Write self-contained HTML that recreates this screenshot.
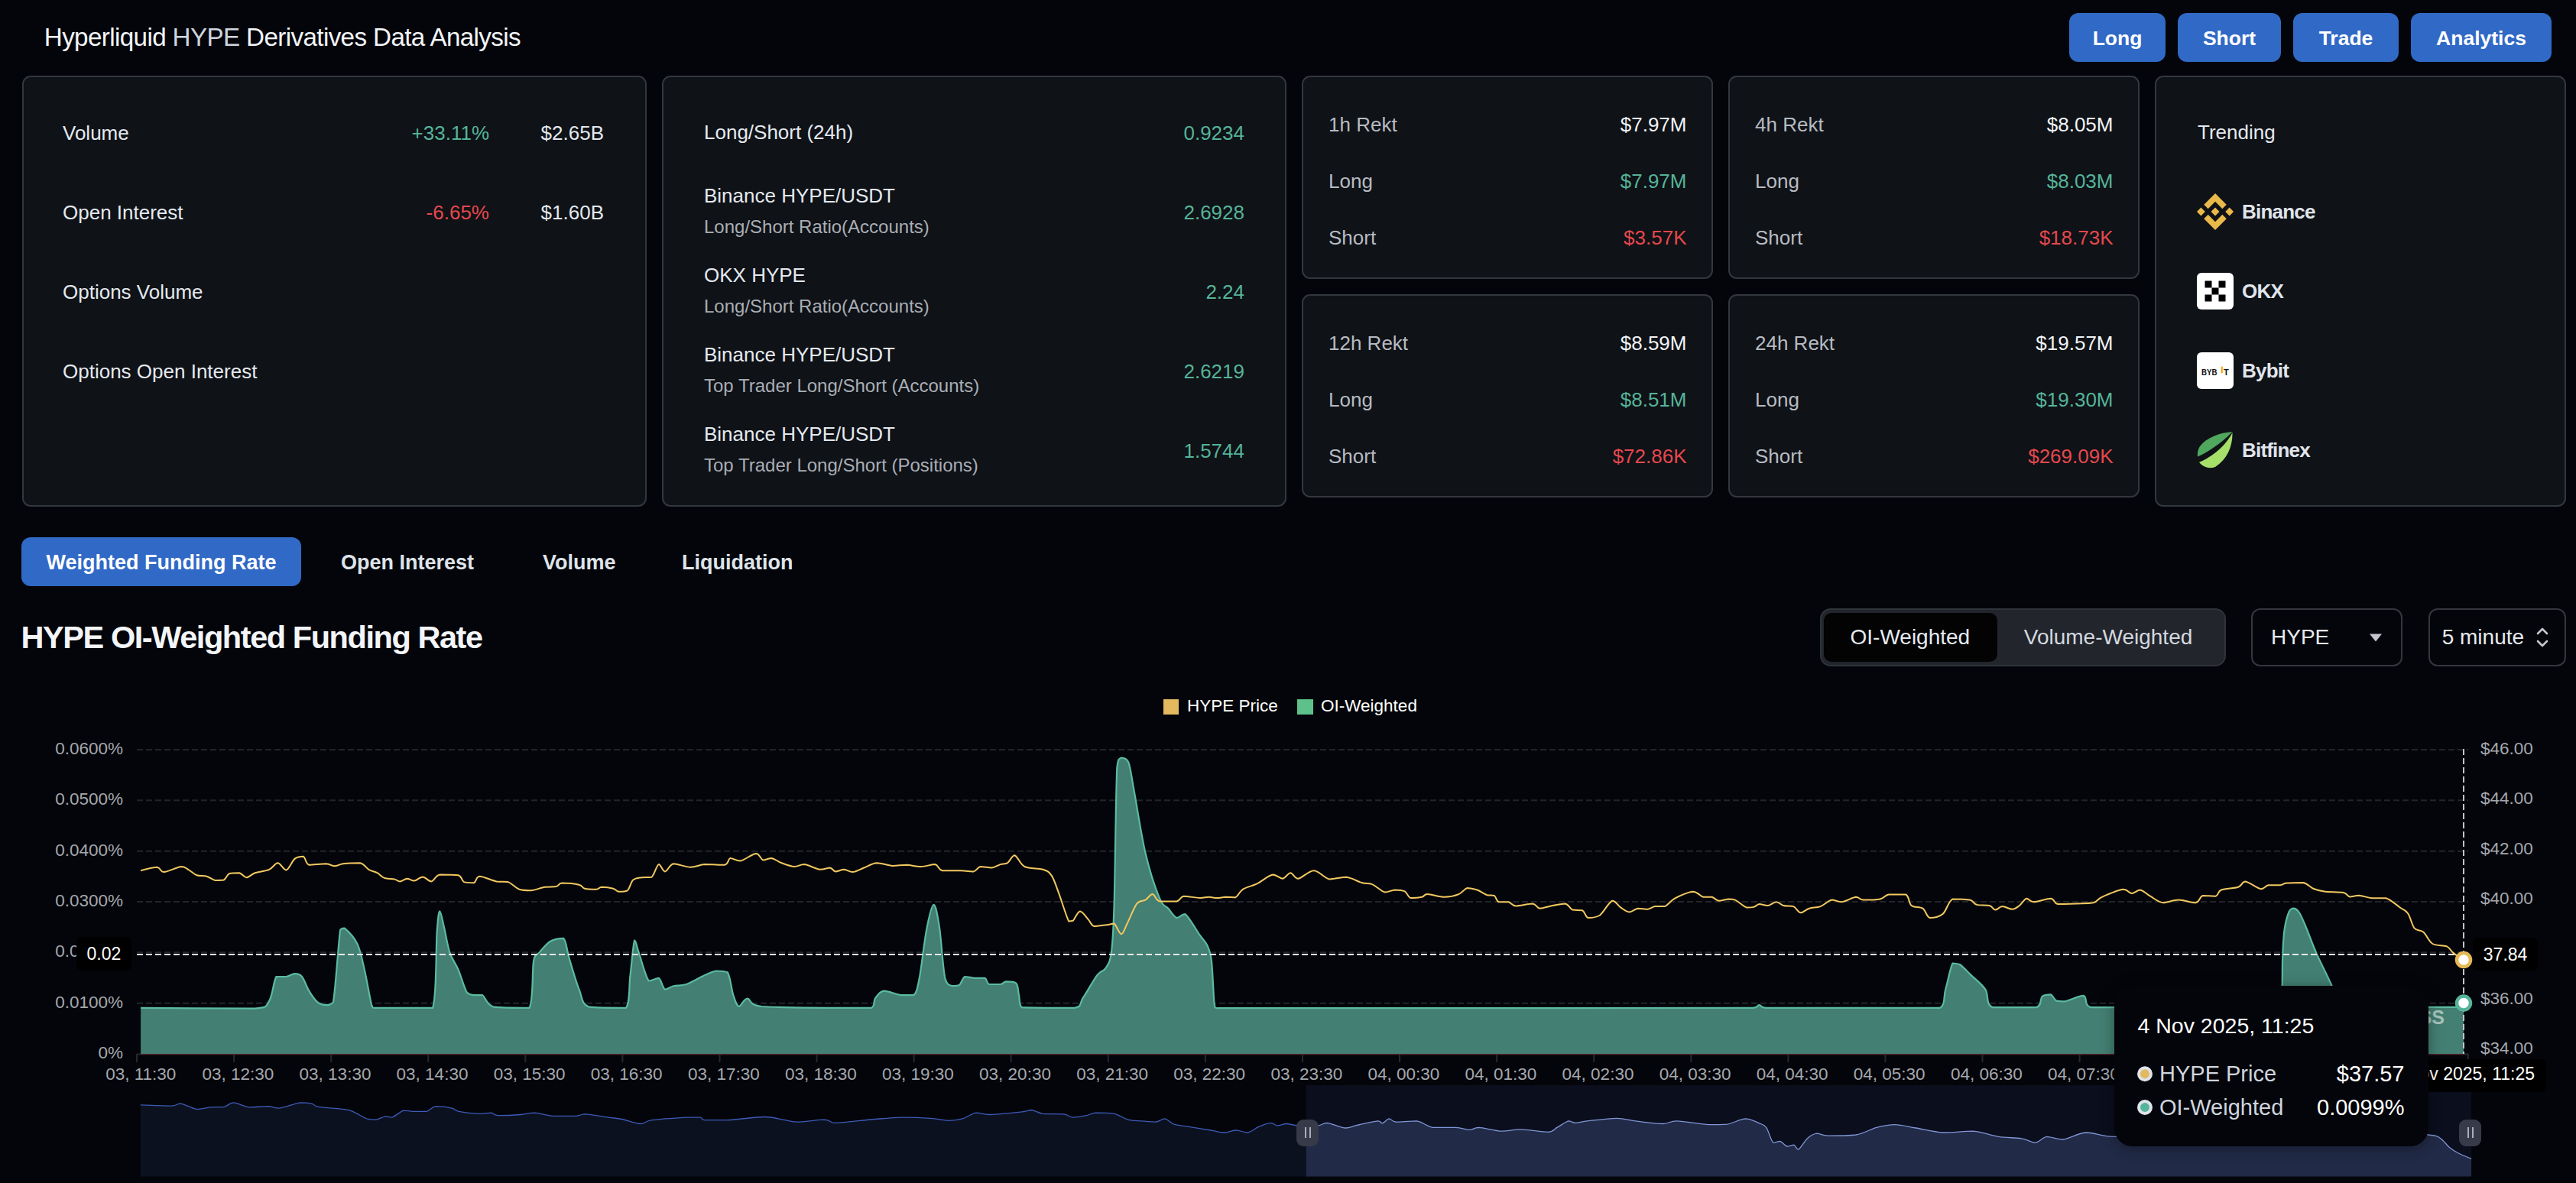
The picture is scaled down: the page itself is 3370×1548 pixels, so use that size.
<!DOCTYPE html>
<html><head><meta charset="utf-8"><title>Hyperliquid HYPE Derivatives Data Analysis</title>
<style>
html,body{margin:0;padding:0;background:#04050a;}
body{width:3370px;height:1548px;position:relative;overflow:hidden;font-family:"Liberation Sans", sans-serif;}
.t{position:absolute;white-space:nowrap;}
.r{position:absolute;}
</style></head><body>
<div class="t" style="left:57.8px;top:32.2px;font-size:33.2px;line-height:33.2px;color:#f3f5f8;font-weight:400;letter-spacing:-0.62px;">Hyperliquid <span style="color:#cdd5df">HYPE</span> Derivatives Data Analysis</div>
<div class="r" style="left:2707.0px;top:17.0px;width:126.0px;height:64.0px;background:#3169c6;border-radius:12px;"></div>
<div class="t" style="left:2770.0px;transform:translateX(-50%);top:37.4px;font-size:26.5px;line-height:26.5px;color:#ffffff;font-weight:700;">Long</div>
<div class="r" style="left:2849.0px;top:17.0px;width:135.0px;height:64.0px;background:#3169c6;border-radius:12px;"></div>
<div class="t" style="left:2916.5px;transform:translateX(-50%);top:37.4px;font-size:26.5px;line-height:26.5px;color:#ffffff;font-weight:700;">Short</div>
<div class="r" style="left:3000.0px;top:17.0px;width:138.0px;height:64.0px;background:#3169c6;border-radius:12px;"></div>
<div class="t" style="left:3069.0px;transform:translateX(-50%);top:37.4px;font-size:26.5px;line-height:26.5px;color:#ffffff;font-weight:700;">Trade</div>
<div class="r" style="left:3154.0px;top:17.0px;width:184.0px;height:64.0px;background:#3169c6;border-radius:12px;"></div>
<div class="t" style="left:3246.0px;transform:translateX(-50%);top:37.4px;font-size:26.5px;line-height:26.5px;color:#ffffff;font-weight:700;">Analytics</div>
<div class="r" style="left:29.0px;top:99.0px;width:817.0px;height:564.0px;background:#0f1217;border-radius:11px;border:2px solid #33373e;box-sizing:border-box;"></div>
<div class="t" style="left:82.0px;top:161.0px;font-size:26px;line-height:26px;color:#e4e9ef;font-weight:400;">Volume</div>
<div class="t" style="left:82.0px;top:265.0px;font-size:26px;line-height:26px;color:#e4e9ef;font-weight:400;">Open Interest</div>
<div class="t" style="left:82.0px;top:369.0px;font-size:26px;line-height:26px;color:#e4e9ef;font-weight:400;">Options Volume</div>
<div class="t" style="left:82.0px;top:473.0px;font-size:26px;line-height:26px;color:#e4e9ef;font-weight:400;">Options Open Interest</div>
<div class="t" style="right:2730.0px;top:161.0px;font-size:26px;line-height:26px;color:#55b499;font-weight:400;">+33.11%</div>
<div class="t" style="right:2580.0px;top:161.0px;font-size:26px;line-height:26px;color:#e4e9ef;font-weight:400;">$2.65B</div>
<div class="t" style="right:2730.0px;top:265.0px;font-size:26px;line-height:26px;color:#e5484d;font-weight:400;">-6.65%</div>
<div class="t" style="right:2580.0px;top:265.0px;font-size:26px;line-height:26px;color:#e4e9ef;font-weight:400;">$1.60B</div>
<div class="r" style="left:866.0px;top:99.0px;width:817.0px;height:564.0px;background:#0f1217;border-radius:11px;border:2px solid #33373e;box-sizing:border-box;"></div>
<div class="t" style="left:921.0px;top:160.0px;font-size:26px;line-height:26px;color:#e4e9ef;font-weight:400;">Long/Short (24h)</div>
<div class="t" style="right:1742.0px;top:161.0px;font-size:26px;line-height:26px;color:#55b499;font-weight:400;">0.9234</div>
<div class="t" style="left:921.0px;top:243.0px;font-size:26px;line-height:26px;color:#e4e9ef;font-weight:400;">Binance HYPE/USDT</div>
<div class="t" style="left:921.0px;top:284.7px;font-size:24px;line-height:24px;color:#a9aeb5;font-weight:400;">Long/Short Ratio(Accounts)</div>
<div class="t" style="right:1742.0px;top:265.0px;font-size:26px;line-height:26px;color:#55b499;font-weight:400;">2.6928</div>
<div class="t" style="left:921.0px;top:347.0px;font-size:26px;line-height:26px;color:#e4e9ef;font-weight:400;">OKX HYPE</div>
<div class="t" style="left:921.0px;top:388.7px;font-size:24px;line-height:24px;color:#a9aeb5;font-weight:400;">Long/Short Ratio(Accounts)</div>
<div class="t" style="right:1742.0px;top:369.0px;font-size:26px;line-height:26px;color:#55b499;font-weight:400;">2.24</div>
<div class="t" style="left:921.0px;top:451.0px;font-size:26px;line-height:26px;color:#e4e9ef;font-weight:400;">Binance HYPE/USDT</div>
<div class="t" style="left:921.0px;top:492.7px;font-size:24px;line-height:24px;color:#a9aeb5;font-weight:400;">Top Trader Long/Short (Accounts)</div>
<div class="t" style="right:1742.0px;top:473.0px;font-size:26px;line-height:26px;color:#55b499;font-weight:400;">2.6219</div>
<div class="t" style="left:921.0px;top:555.0px;font-size:26px;line-height:26px;color:#e4e9ef;font-weight:400;">Binance HYPE/USDT</div>
<div class="t" style="left:921.0px;top:596.7px;font-size:24px;line-height:24px;color:#a9aeb5;font-weight:400;">Top Trader Long/Short (Positions)</div>
<div class="t" style="right:1742.0px;top:577.0px;font-size:26px;line-height:26px;color:#55b499;font-weight:400;">1.5744</div>
<div class="r" style="left:1703.0px;top:99.0px;width:538.0px;height:266.0px;background:#0f1217;border-radius:11px;border:2px solid #33373e;box-sizing:border-box;"></div>
<div class="t" style="left:1738.0px;top:149.6px;font-size:26px;line-height:26px;color:#b7bbc1;font-weight:400;">1h Rekt</div>
<div class="t" style="left:1738.0px;top:223.7px;font-size:26px;line-height:26px;color:#b7bbc1;font-weight:400;">Long</div>
<div class="t" style="left:1738.0px;top:298.0px;font-size:26px;line-height:26px;color:#b7bbc1;font-weight:400;">Short</div>
<div class="t" style="right:1163.5px;top:149.6px;font-size:26px;line-height:26px;color:#f1f4f7;font-weight:400;">$7.97M</div>
<div class="t" style="right:1163.5px;top:223.7px;font-size:26px;line-height:26px;color:#55b499;font-weight:400;">$7.97M</div>
<div class="t" style="right:1163.5px;top:298.0px;font-size:26px;line-height:26px;color:#e5484d;font-weight:400;">$3.57K</div>
<div class="r" style="left:2261.0px;top:99.0px;width:538.0px;height:266.0px;background:#0f1217;border-radius:11px;border:2px solid #33373e;box-sizing:border-box;"></div>
<div class="t" style="left:2296.0px;top:149.6px;font-size:26px;line-height:26px;color:#b7bbc1;font-weight:400;">4h Rekt</div>
<div class="t" style="left:2296.0px;top:223.7px;font-size:26px;line-height:26px;color:#b7bbc1;font-weight:400;">Long</div>
<div class="t" style="left:2296.0px;top:298.0px;font-size:26px;line-height:26px;color:#b7bbc1;font-weight:400;">Short</div>
<div class="t" style="right:605.5px;top:149.6px;font-size:26px;line-height:26px;color:#f1f4f7;font-weight:400;">$8.05M</div>
<div class="t" style="right:605.5px;top:223.7px;font-size:26px;line-height:26px;color:#55b499;font-weight:400;">$8.03M</div>
<div class="t" style="right:605.5px;top:298.0px;font-size:26px;line-height:26px;color:#e5484d;font-weight:400;">$18.73K</div>
<div class="r" style="left:1703.0px;top:385.0px;width:538.0px;height:266.0px;background:#0f1217;border-radius:11px;border:2px solid #33373e;box-sizing:border-box;"></div>
<div class="t" style="left:1738.0px;top:435.6px;font-size:26px;line-height:26px;color:#b7bbc1;font-weight:400;">12h Rekt</div>
<div class="t" style="left:1738.0px;top:509.7px;font-size:26px;line-height:26px;color:#b7bbc1;font-weight:400;">Long</div>
<div class="t" style="left:1738.0px;top:584.0px;font-size:26px;line-height:26px;color:#b7bbc1;font-weight:400;">Short</div>
<div class="t" style="right:1163.5px;top:435.6px;font-size:26px;line-height:26px;color:#f1f4f7;font-weight:400;">$8.59M</div>
<div class="t" style="right:1163.5px;top:509.7px;font-size:26px;line-height:26px;color:#55b499;font-weight:400;">$8.51M</div>
<div class="t" style="right:1163.5px;top:584.0px;font-size:26px;line-height:26px;color:#e5484d;font-weight:400;">$72.86K</div>
<div class="r" style="left:2261.0px;top:385.0px;width:538.0px;height:266.0px;background:#0f1217;border-radius:11px;border:2px solid #33373e;box-sizing:border-box;"></div>
<div class="t" style="left:2296.0px;top:435.6px;font-size:26px;line-height:26px;color:#b7bbc1;font-weight:400;">24h Rekt</div>
<div class="t" style="left:2296.0px;top:509.7px;font-size:26px;line-height:26px;color:#b7bbc1;font-weight:400;">Long</div>
<div class="t" style="left:2296.0px;top:584.0px;font-size:26px;line-height:26px;color:#b7bbc1;font-weight:400;">Short</div>
<div class="t" style="right:605.5px;top:435.6px;font-size:26px;line-height:26px;color:#f1f4f7;font-weight:400;">$19.57M</div>
<div class="t" style="right:605.5px;top:509.7px;font-size:26px;line-height:26px;color:#55b499;font-weight:400;">$19.30M</div>
<div class="t" style="right:605.5px;top:584.0px;font-size:26px;line-height:26px;color:#e5484d;font-weight:400;">$269.09K</div>
<div class="r" style="left:2819.0px;top:99.0px;width:538.0px;height:564.0px;background:#0f1217;border-radius:11px;border:2px solid #33373e;box-sizing:border-box;"></div>
<div class="t" style="left:2875.0px;top:160.0px;font-size:26px;line-height:26px;color:#e4e9ef;font-weight:400;">Trending</div>
<div class="t" style="left:2933.0px;top:264.0px;font-size:26px;line-height:26px;color:#e0e5ec;font-weight:700;letter-spacing:-0.8px;">Binance</div>
<div class="t" style="left:2933.0px;top:368.0px;font-size:26px;line-height:26px;color:#e0e5ec;font-weight:700;letter-spacing:-0.8px;">OKX</div>
<div class="t" style="left:2933.0px;top:472.0px;font-size:26px;line-height:26px;color:#e0e5ec;font-weight:700;letter-spacing:-0.8px;">Bybit</div>
<div class="t" style="left:2933.0px;top:576.0px;font-size:26px;line-height:26px;color:#e0e5ec;font-weight:700;letter-spacing:-0.8px;">Bitfinex</div>

<svg class="r" style="left:2874px;top:253px" width="48" height="48" viewBox="0 0 126.61 126.61"><g fill="#e9b949"><path d="M38.73 53.2l24.59-24.58 24.6 24.6 14.3-14.31L63.32 0 24.42 38.9l14.31 14.3M0 63.31l14.3-14.31 14.31 14.31-14.31 14.3zM38.73 73.41l24.59 24.59 24.6-24.6 14.31 14.29-38.9 38.91-38.91-38.88-.02-.02 14.32-14.29M98.3 63.31l14.3-14.31 14.31 14.3-14.31 14.32z"/><path d="M77.83 63.3L63.32 48.78 52.59 59.51l-1.24 1.23-2.54 2.54-.02.02.02.03 14.51 14.5 14.51-14.52.01-.01-.01-.01"/></g></svg>
<svg class="r" style="left:2874px;top:357px" width="48" height="48" viewBox="0 0 48 48"><rect width="48" height="48" rx="6" fill="#fff"/><g fill="#000"><rect x="10.5" y="10.5" width="9" height="9"/><rect x="28.5" y="10.5" width="9" height="9"/><rect x="19.5" y="19.5" width="9" height="9"/><rect x="10.5" y="28.5" width="9" height="9"/><rect x="28.5" y="28.5" width="9" height="9"/></g></svg>
<svg class="r" style="left:2874px;top:461px" width="48" height="48" viewBox="0 0 48 48"><rect width="48" height="48" rx="6" fill="#fff"/><text x="6" y="29.5" font-family="Liberation Sans" font-weight="700" font-size="11" fill="#111" textLength="20.5" lengthAdjust="spacingAndGlyphs">BYB</text><rect x="31.7" y="18.7" width="2.1" height="8.6" fill="#f7a600"/><text x="35" y="29.5" font-family="Liberation Sans" font-weight="700" font-size="11" fill="#111">T</text></svg>
<svg class="r" style="left:2874px;top:565px" width="48" height="48" viewBox="0 0 48 48"><path d="M46.5,0 C30,1 12,8 4,19 C1,24 0.5,29 1,32.5 C14,27 32,15 46.5,0 Z" fill="#4fa85e"/><path d="M46.5,1 C47,18 40,36 24,46 C16,49 8,46 3,40 C20,33 38,18 46.5,1 Z" fill="#a6e06a"/></svg>

<div class="r" style="left:28.0px;top:703.0px;width:366.0px;height:64.0px;background:#3169c6;border-radius:12px;"></div>
<div class="t" style="left:60.5px;top:723.1px;font-size:27px;line-height:27px;color:#ffffff;font-weight:700;">Weighted Funding Rate</div>
<div class="t" style="left:446.0px;top:723.1px;font-size:27px;line-height:27px;color:#dfe4ea;font-weight:700;">Open Interest</div>
<div class="t" style="left:710.0px;top:723.1px;font-size:27px;line-height:27px;color:#dfe4ea;font-weight:700;">Volume</div>
<div class="t" style="left:892.0px;top:723.1px;font-size:27px;line-height:27px;color:#dfe4ea;font-weight:700;">Liquidation</div>
<div class="t" style="left:27.6px;top:813.3px;font-size:41.5px;line-height:41.5px;color:#f3f5f8;font-weight:700;letter-spacing:-1.44px;">HYPE OI-Weighted Funding Rate</div>
<div class="r" style="left:2380.5px;top:796.0px;width:531.1px;height:76.0px;background:#22252c;border-radius:14px;border:2px solid #2f333a;box-sizing:border-box;"></div>
<div class="r" style="left:2385.6px;top:801.8px;width:227.8px;height:64.2px;background:#030304;border-radius:10px;"></div>
<div class="t" style="left:2420.5px;top:820.3px;font-size:28px;line-height:28px;color:#e6eaf0;font-weight:400;">OI-Weighted</div>
<div class="t" style="left:2647.8px;top:820.3px;font-size:28px;line-height:28px;color:#d3d8df;font-weight:400;">Volume-Weighted</div>
<div class="r" style="left:2945.0px;top:796.0px;width:198.0px;height:76.0px;background:#04050a;border-radius:12px;border:2px solid #33373e;box-sizing:border-box;"></div>
<div class="t" style="left:2971.0px;top:820.3px;font-size:28px;line-height:28px;color:#e6eaf0;font-weight:400;">HYPE</div>
<svg class="r" style="left:3099px;top:829px" width="18" height="11" viewBox="0 0 18 11"><path d="M1 0.5 H17 L9 10.5 Z" fill="#c3c7cd"/></svg>
<div class="r" style="left:3177.0px;top:796.0px;width:180.0px;height:76.0px;background:#04050a;border-radius:12px;border:2px solid #33373e;box-sizing:border-box;"></div>
<div class="t" style="left:3194.7px;top:820.3px;font-size:28px;line-height:28px;color:#e6eaf0;font-weight:400;">5 minute</div>
<svg class="r" style="left:3317px;top:820px" width="18" height="28" viewBox="0 0 18 28"><path d="M3 9 L9 3 L15 9 M3 19 L9 25 L15 19" stroke="#c3c7cd" stroke-width="2.6" fill="none" stroke-linecap="round" stroke-linejoin="round"/></svg>
<div class="r" style="left:1522.0px;top:915.0px;width:20.0px;height:20.0px;background:#e2b95f;border-radius:0px;"></div>
<div class="t" style="left:1553.0px;top:912.6px;font-size:22.5px;line-height:22.5px;color:#ffffff;font-weight:400;">HYPE Price</div>
<div class="r" style="left:1697.0px;top:915.0px;width:20.5px;height:20.0px;background:#5ec08a;border-radius:0px;"></div>
<div class="t" style="left:1728.0px;top:912.6px;font-size:22.5px;line-height:22.5px;color:#ffffff;font-weight:400;">OI-Weighted</div>
<svg class="r" style="left:0;top:0" width="3370" height="1548" viewBox="0 0 3370 1548">
<rect x="1708.7" y="1420" width="1524.4" height="119.6" fill="#0a0e1d"/>
<clipPath id="cl"><rect x="0" y="0" width="1708.7" height="1548"/></clipPath><clipPath id="cr"><rect x="1708.7" y="0" width="2000" height="1548"/></clipPath>
<path d="M183.8,1445.9 C190.5,1446.1 215.5,1447.1 224.2,1447.1 C232.9,1446.8 230.7,1444.1 236.2,1444.1 C241.7,1444.8 250.7,1450.5 257.2,1451.3 C263.7,1451.3 269.3,1449.4 275.3,1448.9 C281.3,1448.4 288.3,1448.9 293.3,1448.3 C298.3,1447.3 299.9,1442.9 305.4,1442.9 C310.9,1443.0 318.9,1448.1 326.4,1448.9 C333.9,1448.9 344.0,1447.7 350.5,1447.7 C357.0,1447.9 358.5,1450.1 365.5,1450.1 C372.5,1449.3 385.6,1443.9 392.6,1442.9 C399.6,1442.9 403.7,1443.2 407.7,1444.1 C411.7,1445.0 409.2,1447.0 416.7,1448.3 C424.2,1449.6 444.8,1450.6 452.8,1451.9 C460.8,1453.2 460.3,1454.1 464.8,1456.1 C469.3,1458.1 475.4,1462.4 479.9,1463.9 C484.4,1465.1 487.9,1465.1 491.9,1465.1 C495.9,1464.6 500.4,1461.4 503.9,1460.9 C507.4,1460.9 509.0,1462.1 513.0,1462.1 C517.0,1460.8 523.5,1454.4 528.0,1453.1 C532.5,1453.1 535.0,1454.1 540.0,1454.3 C545.0,1454.3 553.1,1454.3 558.1,1454.3 C563.1,1453.2 564.6,1448.4 570.1,1447.7 C575.6,1447.7 586.2,1449.0 591.2,1450.1 C596.2,1451.2 594.2,1453.1 600.2,1454.3 C606.2,1455.5 620.3,1457.0 627.3,1457.3 C634.3,1457.3 638.3,1456.1 642.3,1456.1 C646.3,1456.5 644.8,1459.3 651.3,1459.7 C657.8,1459.7 673.4,1459.1 681.4,1458.5 C689.4,1457.9 692.5,1456.1 699.5,1456.1 C706.5,1456.4 714.5,1459.6 723.5,1460.3 C732.5,1460.3 746.6,1460.3 753.6,1460.3 C760.6,1459.9 758.7,1457.9 765.7,1457.9 C772.7,1458.2 787.8,1461.0 795.8,1462.1 C803.8,1463.2 806.8,1463.1 813.8,1464.5 C820.8,1465.9 831.4,1470.3 837.9,1470.5 C844.4,1470.5 842.9,1467.1 852.9,1465.7 C862.9,1464.3 887.5,1462.7 898.0,1462.1 C908.5,1462.1 912.1,1462.1 916.1,1462.1 C920.1,1462.7 916.1,1465.1 922.1,1465.7 C928.1,1465.7 939.2,1465.7 952.2,1465.7 C965.2,1465.0 988.3,1461.6 1000.3,1461.5 C1012.3,1461.5 1017.4,1464.0 1024.4,1465.1 C1031.4,1466.2 1033.4,1468.1 1042.4,1468.1 C1051.4,1468.1 1070.5,1465.1 1078.5,1465.1 C1086.5,1465.3 1085.6,1468.8 1090.6,1469.3 C1095.6,1469.3 1099.6,1468.9 1108.6,1468.1 C1117.6,1467.3 1132.7,1465.5 1144.7,1464.5 C1156.7,1463.5 1168.8,1462.3 1180.8,1462.1 C1192.8,1462.1 1206.9,1462.6 1216.9,1463.3 C1226.9,1464.0 1233.9,1466.2 1240.9,1466.3 C1247.9,1466.3 1253.0,1465.6 1259.0,1463.9 C1265.0,1462.2 1271.1,1457.0 1277.1,1456.1 C1283.1,1456.1 1285.2,1458.5 1295.2,1458.5 C1305.2,1458.3 1328.3,1455.9 1337.3,1454.9 C1346.3,1453.9 1344.8,1452.5 1349.3,1452.5 C1353.8,1452.9 1357.4,1456.4 1364.4,1457.3 C1371.4,1457.9 1384.9,1457.3 1391.4,1457.9 C1397.9,1458.7 1398.5,1461.8 1403.5,1462.1 C1408.5,1462.1 1416.5,1460.7 1421.5,1459.7 C1426.5,1458.7 1427.6,1456.5 1433.6,1456.1 C1439.6,1456.1 1450.7,1456.1 1457.7,1457.3 C1464.7,1458.8 1469.7,1463.5 1475.7,1465.1 C1481.7,1466.7 1487.8,1466.4 1493.8,1466.9 C1499.8,1467.4 1506.8,1468.1 1511.8,1468.1 C1516.8,1467.6 1519.8,1463.9 1523.8,1463.9 C1527.8,1464.4 1530.8,1469.4 1535.8,1471.1 C1540.8,1472.8 1546.0,1472.9 1554.0,1474.2 C1562.0,1475.5 1576.0,1477.7 1584.0,1479.0 C1592.0,1480.3 1596.5,1482.0 1602.0,1482.0 C1607.5,1482.0 1612.0,1479.0 1617.0,1479.0 C1622.0,1479.0 1627.1,1482.0 1632.1,1482.0 C1637.1,1481.2 1642.1,1476.3 1647.1,1474.2 C1652.1,1472.1 1658.2,1469.5 1662.2,1469.3 C1666.2,1469.3 1667.7,1472.7 1671.2,1472.9 C1674.7,1472.9 1678.7,1470.5 1683.2,1470.5 C1687.7,1470.5 1691.5,1472.5 1698.3,1472.9 C1705.1,1472.9 1717.8,1472.9 1724.1,1472.9 C1730.4,1472.3 1730.1,1469.3 1736.1,1469.3 C1742.1,1469.8 1753.7,1475.5 1760.2,1476.0 C1766.7,1476.0 1768.2,1473.8 1775.2,1472.3 C1782.2,1470.8 1796.8,1467.3 1802.3,1466.9 C1807.8,1466.9 1805.8,1469.9 1808.3,1469.9 C1810.8,1469.4 1814.3,1464.2 1817.3,1463.9 C1820.3,1463.9 1820.4,1467.6 1826.4,1468.1 C1832.4,1468.1 1845.4,1466.9 1853.4,1466.9 C1861.4,1468.1 1866.0,1474.0 1874.5,1475.4 C1883.0,1475.4 1896.6,1475.4 1904.6,1475.4 C1912.6,1475.9 1917.6,1478.4 1922.6,1478.4 C1927.6,1478.4 1927.6,1475.4 1934.6,1475.4 C1941.6,1475.7 1955.7,1479.8 1964.7,1480.2 C1973.7,1480.2 1978.8,1477.8 1988.8,1477.8 C1998.8,1478.0 2016.9,1481.4 2024.9,1481.4 C2032.9,1481.0 2032.4,1477.8 2036.9,1475.4 C2041.4,1473.0 2048.0,1467.9 2052.0,1466.9 C2056.0,1466.9 2057.0,1469.3 2061.0,1469.3 C2065.0,1469.3 2067.1,1467.9 2076.1,1466.9 C2085.1,1465.9 2104.7,1463.3 2115.2,1463.3 C2125.7,1463.3 2129.2,1465.7 2139.2,1466.9 C2149.2,1468.1 2166.3,1470.5 2175.3,1470.5 C2184.3,1470.5 2183.4,1466.9 2193.4,1466.9 C2203.4,1467.1 2224.5,1471.0 2235.5,1471.7 C2246.5,1471.7 2251.6,1471.7 2259.6,1471.1 C2267.6,1469.8 2276.6,1464.1 2283.6,1463.9 C2290.6,1463.9 2297.2,1468.0 2301.7,1469.9 C2306.2,1471.8 2307.7,1471.2 2310.7,1475.4 C2313.7,1479.6 2316.7,1492.2 2319.7,1495.2 C2322.7,1495.2 2325.8,1493.4 2328.8,1493.4 C2331.8,1494.2 2334.8,1499.2 2337.8,1500.0 C2340.8,1500.0 2344.3,1498.2 2346.8,1498.2 C2349.3,1498.9 2349.8,1504.2 2352.8,1504.2 C2355.8,1502.7 2360.9,1492.7 2364.9,1489.2 C2368.9,1485.7 2372.4,1483.7 2376.9,1483.2 C2381.4,1483.2 2383.4,1485.9 2391.9,1486.2 C2400.4,1486.2 2417.5,1486.2 2428.0,1485.0 C2438.5,1483.2 2446.6,1477.6 2455.1,1475.4 C2463.6,1473.2 2470.7,1471.7 2479.2,1471.7 C2487.7,1471.8 2495.8,1474.3 2506.3,1476.0 C2516.8,1477.7 2529.9,1481.3 2542.4,1482.0 C2554.9,1482.0 2569.5,1480.2 2581.5,1480.2 C2593.5,1481.1 2604.1,1485.8 2614.6,1487.4 C2625.1,1489.0 2636.7,1488.5 2644.7,1489.8 C2652.7,1491.1 2657.2,1495.2 2662.7,1495.2 C2668.2,1494.8 2671.7,1488.1 2677.7,1487.4 C2683.7,1487.4 2690.3,1491.0 2698.8,1491.0 C2707.3,1490.1 2717.9,1482.6 2728.9,1482.0 C2739.9,1482.0 2749.8,1487.1 2765.0,1487.4 C2780.2,1487.4 2800.8,1485.4 2820.0,1484.0 C2839.2,1482.6 2860.0,1480.3 2880.0,1479.0 C2900.0,1477.7 2920.0,1476.8 2940.0,1476.0 C2960.0,1475.2 2980.0,1474.0 3000.0,1474.0 C3020.0,1474.0 3040.0,1475.0 3060.0,1476.0 C3080.0,1477.0 3100.5,1478.5 3120.0,1480.0 C3139.5,1481.5 3165.1,1483.5 3177.1,1485.0 C3189.1,1486.5 3187.7,1486.5 3192.2,1489.2 C3196.7,1491.9 3200.2,1497.9 3204.2,1501.2 C3208.2,1504.5 3211.4,1506.5 3216.2,1509.0 C3221.0,1511.5 3230.3,1515.1 3233.1,1516.3 L3233.1,1539.6 L183.8,1539.6 Z" fill="#0c1120" clip-path="url(#cl)"/>
<path d="M183.8,1445.9 C190.5,1446.1 215.5,1447.1 224.2,1447.1 C232.9,1446.8 230.7,1444.1 236.2,1444.1 C241.7,1444.8 250.7,1450.5 257.2,1451.3 C263.7,1451.3 269.3,1449.4 275.3,1448.9 C281.3,1448.4 288.3,1448.9 293.3,1448.3 C298.3,1447.3 299.9,1442.9 305.4,1442.9 C310.9,1443.0 318.9,1448.1 326.4,1448.9 C333.9,1448.9 344.0,1447.7 350.5,1447.7 C357.0,1447.9 358.5,1450.1 365.5,1450.1 C372.5,1449.3 385.6,1443.9 392.6,1442.9 C399.6,1442.9 403.7,1443.2 407.7,1444.1 C411.7,1445.0 409.2,1447.0 416.7,1448.3 C424.2,1449.6 444.8,1450.6 452.8,1451.9 C460.8,1453.2 460.3,1454.1 464.8,1456.1 C469.3,1458.1 475.4,1462.4 479.9,1463.9 C484.4,1465.1 487.9,1465.1 491.9,1465.1 C495.9,1464.6 500.4,1461.4 503.9,1460.9 C507.4,1460.9 509.0,1462.1 513.0,1462.1 C517.0,1460.8 523.5,1454.4 528.0,1453.1 C532.5,1453.1 535.0,1454.1 540.0,1454.3 C545.0,1454.3 553.1,1454.3 558.1,1454.3 C563.1,1453.2 564.6,1448.4 570.1,1447.7 C575.6,1447.7 586.2,1449.0 591.2,1450.1 C596.2,1451.2 594.2,1453.1 600.2,1454.3 C606.2,1455.5 620.3,1457.0 627.3,1457.3 C634.3,1457.3 638.3,1456.1 642.3,1456.1 C646.3,1456.5 644.8,1459.3 651.3,1459.7 C657.8,1459.7 673.4,1459.1 681.4,1458.5 C689.4,1457.9 692.5,1456.1 699.5,1456.1 C706.5,1456.4 714.5,1459.6 723.5,1460.3 C732.5,1460.3 746.6,1460.3 753.6,1460.3 C760.6,1459.9 758.7,1457.9 765.7,1457.9 C772.7,1458.2 787.8,1461.0 795.8,1462.1 C803.8,1463.2 806.8,1463.1 813.8,1464.5 C820.8,1465.9 831.4,1470.3 837.9,1470.5 C844.4,1470.5 842.9,1467.1 852.9,1465.7 C862.9,1464.3 887.5,1462.7 898.0,1462.1 C908.5,1462.1 912.1,1462.1 916.1,1462.1 C920.1,1462.7 916.1,1465.1 922.1,1465.7 C928.1,1465.7 939.2,1465.7 952.2,1465.7 C965.2,1465.0 988.3,1461.6 1000.3,1461.5 C1012.3,1461.5 1017.4,1464.0 1024.4,1465.1 C1031.4,1466.2 1033.4,1468.1 1042.4,1468.1 C1051.4,1468.1 1070.5,1465.1 1078.5,1465.1 C1086.5,1465.3 1085.6,1468.8 1090.6,1469.3 C1095.6,1469.3 1099.6,1468.9 1108.6,1468.1 C1117.6,1467.3 1132.7,1465.5 1144.7,1464.5 C1156.7,1463.5 1168.8,1462.3 1180.8,1462.1 C1192.8,1462.1 1206.9,1462.6 1216.9,1463.3 C1226.9,1464.0 1233.9,1466.2 1240.9,1466.3 C1247.9,1466.3 1253.0,1465.6 1259.0,1463.9 C1265.0,1462.2 1271.1,1457.0 1277.1,1456.1 C1283.1,1456.1 1285.2,1458.5 1295.2,1458.5 C1305.2,1458.3 1328.3,1455.9 1337.3,1454.9 C1346.3,1453.9 1344.8,1452.5 1349.3,1452.5 C1353.8,1452.9 1357.4,1456.4 1364.4,1457.3 C1371.4,1457.9 1384.9,1457.3 1391.4,1457.9 C1397.9,1458.7 1398.5,1461.8 1403.5,1462.1 C1408.5,1462.1 1416.5,1460.7 1421.5,1459.7 C1426.5,1458.7 1427.6,1456.5 1433.6,1456.1 C1439.6,1456.1 1450.7,1456.1 1457.7,1457.3 C1464.7,1458.8 1469.7,1463.5 1475.7,1465.1 C1481.7,1466.7 1487.8,1466.4 1493.8,1466.9 C1499.8,1467.4 1506.8,1468.1 1511.8,1468.1 C1516.8,1467.6 1519.8,1463.9 1523.8,1463.9 C1527.8,1464.4 1530.8,1469.4 1535.8,1471.1 C1540.8,1472.8 1546.0,1472.9 1554.0,1474.2 C1562.0,1475.5 1576.0,1477.7 1584.0,1479.0 C1592.0,1480.3 1596.5,1482.0 1602.0,1482.0 C1607.5,1482.0 1612.0,1479.0 1617.0,1479.0 C1622.0,1479.0 1627.1,1482.0 1632.1,1482.0 C1637.1,1481.2 1642.1,1476.3 1647.1,1474.2 C1652.1,1472.1 1658.2,1469.5 1662.2,1469.3 C1666.2,1469.3 1667.7,1472.7 1671.2,1472.9 C1674.7,1472.9 1678.7,1470.5 1683.2,1470.5 C1687.7,1470.5 1691.5,1472.5 1698.3,1472.9 C1705.1,1472.9 1717.8,1472.9 1724.1,1472.9 C1730.4,1472.3 1730.1,1469.3 1736.1,1469.3 C1742.1,1469.8 1753.7,1475.5 1760.2,1476.0 C1766.7,1476.0 1768.2,1473.8 1775.2,1472.3 C1782.2,1470.8 1796.8,1467.3 1802.3,1466.9 C1807.8,1466.9 1805.8,1469.9 1808.3,1469.9 C1810.8,1469.4 1814.3,1464.2 1817.3,1463.9 C1820.3,1463.9 1820.4,1467.6 1826.4,1468.1 C1832.4,1468.1 1845.4,1466.9 1853.4,1466.9 C1861.4,1468.1 1866.0,1474.0 1874.5,1475.4 C1883.0,1475.4 1896.6,1475.4 1904.6,1475.4 C1912.6,1475.9 1917.6,1478.4 1922.6,1478.4 C1927.6,1478.4 1927.6,1475.4 1934.6,1475.4 C1941.6,1475.7 1955.7,1479.8 1964.7,1480.2 C1973.7,1480.2 1978.8,1477.8 1988.8,1477.8 C1998.8,1478.0 2016.9,1481.4 2024.9,1481.4 C2032.9,1481.0 2032.4,1477.8 2036.9,1475.4 C2041.4,1473.0 2048.0,1467.9 2052.0,1466.9 C2056.0,1466.9 2057.0,1469.3 2061.0,1469.3 C2065.0,1469.3 2067.1,1467.9 2076.1,1466.9 C2085.1,1465.9 2104.7,1463.3 2115.2,1463.3 C2125.7,1463.3 2129.2,1465.7 2139.2,1466.9 C2149.2,1468.1 2166.3,1470.5 2175.3,1470.5 C2184.3,1470.5 2183.4,1466.9 2193.4,1466.9 C2203.4,1467.1 2224.5,1471.0 2235.5,1471.7 C2246.5,1471.7 2251.6,1471.7 2259.6,1471.1 C2267.6,1469.8 2276.6,1464.1 2283.6,1463.9 C2290.6,1463.9 2297.2,1468.0 2301.7,1469.9 C2306.2,1471.8 2307.7,1471.2 2310.7,1475.4 C2313.7,1479.6 2316.7,1492.2 2319.7,1495.2 C2322.7,1495.2 2325.8,1493.4 2328.8,1493.4 C2331.8,1494.2 2334.8,1499.2 2337.8,1500.0 C2340.8,1500.0 2344.3,1498.2 2346.8,1498.2 C2349.3,1498.9 2349.8,1504.2 2352.8,1504.2 C2355.8,1502.7 2360.9,1492.7 2364.9,1489.2 C2368.9,1485.7 2372.4,1483.7 2376.9,1483.2 C2381.4,1483.2 2383.4,1485.9 2391.9,1486.2 C2400.4,1486.2 2417.5,1486.2 2428.0,1485.0 C2438.5,1483.2 2446.6,1477.6 2455.1,1475.4 C2463.6,1473.2 2470.7,1471.7 2479.2,1471.7 C2487.7,1471.8 2495.8,1474.3 2506.3,1476.0 C2516.8,1477.7 2529.9,1481.3 2542.4,1482.0 C2554.9,1482.0 2569.5,1480.2 2581.5,1480.2 C2593.5,1481.1 2604.1,1485.8 2614.6,1487.4 C2625.1,1489.0 2636.7,1488.5 2644.7,1489.8 C2652.7,1491.1 2657.2,1495.2 2662.7,1495.2 C2668.2,1494.8 2671.7,1488.1 2677.7,1487.4 C2683.7,1487.4 2690.3,1491.0 2698.8,1491.0 C2707.3,1490.1 2717.9,1482.6 2728.9,1482.0 C2739.9,1482.0 2749.8,1487.1 2765.0,1487.4 C2780.2,1487.4 2800.8,1485.4 2820.0,1484.0 C2839.2,1482.6 2860.0,1480.3 2880.0,1479.0 C2900.0,1477.7 2920.0,1476.8 2940.0,1476.0 C2960.0,1475.2 2980.0,1474.0 3000.0,1474.0 C3020.0,1474.0 3040.0,1475.0 3060.0,1476.0 C3080.0,1477.0 3100.5,1478.5 3120.0,1480.0 C3139.5,1481.5 3165.1,1483.5 3177.1,1485.0 C3189.1,1486.5 3187.7,1486.5 3192.2,1489.2 C3196.7,1491.9 3200.2,1497.9 3204.2,1501.2 C3208.2,1504.5 3211.4,1506.5 3216.2,1509.0 C3221.0,1511.5 3230.3,1515.1 3233.1,1516.3 L3233.1,1539.6 L183.8,1539.6 Z" fill="#212a46" clip-path="url(#cr)"/>
<path d="M183.8,1445.9 C190.5,1446.1 215.5,1447.1 224.2,1447.1 C232.9,1446.8 230.7,1444.1 236.2,1444.1 C241.7,1444.8 250.7,1450.5 257.2,1451.3 C263.7,1451.3 269.3,1449.4 275.3,1448.9 C281.3,1448.4 288.3,1448.9 293.3,1448.3 C298.3,1447.3 299.9,1442.9 305.4,1442.9 C310.9,1443.0 318.9,1448.1 326.4,1448.9 C333.9,1448.9 344.0,1447.7 350.5,1447.7 C357.0,1447.9 358.5,1450.1 365.5,1450.1 C372.5,1449.3 385.6,1443.9 392.6,1442.9 C399.6,1442.9 403.7,1443.2 407.7,1444.1 C411.7,1445.0 409.2,1447.0 416.7,1448.3 C424.2,1449.6 444.8,1450.6 452.8,1451.9 C460.8,1453.2 460.3,1454.1 464.8,1456.1 C469.3,1458.1 475.4,1462.4 479.9,1463.9 C484.4,1465.1 487.9,1465.1 491.9,1465.1 C495.9,1464.6 500.4,1461.4 503.9,1460.9 C507.4,1460.9 509.0,1462.1 513.0,1462.1 C517.0,1460.8 523.5,1454.4 528.0,1453.1 C532.5,1453.1 535.0,1454.1 540.0,1454.3 C545.0,1454.3 553.1,1454.3 558.1,1454.3 C563.1,1453.2 564.6,1448.4 570.1,1447.7 C575.6,1447.7 586.2,1449.0 591.2,1450.1 C596.2,1451.2 594.2,1453.1 600.2,1454.3 C606.2,1455.5 620.3,1457.0 627.3,1457.3 C634.3,1457.3 638.3,1456.1 642.3,1456.1 C646.3,1456.5 644.8,1459.3 651.3,1459.7 C657.8,1459.7 673.4,1459.1 681.4,1458.5 C689.4,1457.9 692.5,1456.1 699.5,1456.1 C706.5,1456.4 714.5,1459.6 723.5,1460.3 C732.5,1460.3 746.6,1460.3 753.6,1460.3 C760.6,1459.9 758.7,1457.9 765.7,1457.9 C772.7,1458.2 787.8,1461.0 795.8,1462.1 C803.8,1463.2 806.8,1463.1 813.8,1464.5 C820.8,1465.9 831.4,1470.3 837.9,1470.5 C844.4,1470.5 842.9,1467.1 852.9,1465.7 C862.9,1464.3 887.5,1462.7 898.0,1462.1 C908.5,1462.1 912.1,1462.1 916.1,1462.1 C920.1,1462.7 916.1,1465.1 922.1,1465.7 C928.1,1465.7 939.2,1465.7 952.2,1465.7 C965.2,1465.0 988.3,1461.6 1000.3,1461.5 C1012.3,1461.5 1017.4,1464.0 1024.4,1465.1 C1031.4,1466.2 1033.4,1468.1 1042.4,1468.1 C1051.4,1468.1 1070.5,1465.1 1078.5,1465.1 C1086.5,1465.3 1085.6,1468.8 1090.6,1469.3 C1095.6,1469.3 1099.6,1468.9 1108.6,1468.1 C1117.6,1467.3 1132.7,1465.5 1144.7,1464.5 C1156.7,1463.5 1168.8,1462.3 1180.8,1462.1 C1192.8,1462.1 1206.9,1462.6 1216.9,1463.3 C1226.9,1464.0 1233.9,1466.2 1240.9,1466.3 C1247.9,1466.3 1253.0,1465.6 1259.0,1463.9 C1265.0,1462.2 1271.1,1457.0 1277.1,1456.1 C1283.1,1456.1 1285.2,1458.5 1295.2,1458.5 C1305.2,1458.3 1328.3,1455.9 1337.3,1454.9 C1346.3,1453.9 1344.8,1452.5 1349.3,1452.5 C1353.8,1452.9 1357.4,1456.4 1364.4,1457.3 C1371.4,1457.9 1384.9,1457.3 1391.4,1457.9 C1397.9,1458.7 1398.5,1461.8 1403.5,1462.1 C1408.5,1462.1 1416.5,1460.7 1421.5,1459.7 C1426.5,1458.7 1427.6,1456.5 1433.6,1456.1 C1439.6,1456.1 1450.7,1456.1 1457.7,1457.3 C1464.7,1458.8 1469.7,1463.5 1475.7,1465.1 C1481.7,1466.7 1487.8,1466.4 1493.8,1466.9 C1499.8,1467.4 1506.8,1468.1 1511.8,1468.1 C1516.8,1467.6 1519.8,1463.9 1523.8,1463.9 C1527.8,1464.4 1530.8,1469.4 1535.8,1471.1 C1540.8,1472.8 1546.0,1472.9 1554.0,1474.2 C1562.0,1475.5 1576.0,1477.7 1584.0,1479.0 C1592.0,1480.3 1596.5,1482.0 1602.0,1482.0 C1607.5,1482.0 1612.0,1479.0 1617.0,1479.0 C1622.0,1479.0 1627.1,1482.0 1632.1,1482.0 C1637.1,1481.2 1642.1,1476.3 1647.1,1474.2 C1652.1,1472.1 1658.2,1469.5 1662.2,1469.3 C1666.2,1469.3 1667.7,1472.7 1671.2,1472.9 C1674.7,1472.9 1678.7,1470.5 1683.2,1470.5 C1687.7,1470.5 1691.5,1472.5 1698.3,1472.9 C1705.1,1472.9 1717.8,1472.9 1724.1,1472.9 C1730.4,1472.3 1730.1,1469.3 1736.1,1469.3 C1742.1,1469.8 1753.7,1475.5 1760.2,1476.0 C1766.7,1476.0 1768.2,1473.8 1775.2,1472.3 C1782.2,1470.8 1796.8,1467.3 1802.3,1466.9 C1807.8,1466.9 1805.8,1469.9 1808.3,1469.9 C1810.8,1469.4 1814.3,1464.2 1817.3,1463.9 C1820.3,1463.9 1820.4,1467.6 1826.4,1468.1 C1832.4,1468.1 1845.4,1466.9 1853.4,1466.9 C1861.4,1468.1 1866.0,1474.0 1874.5,1475.4 C1883.0,1475.4 1896.6,1475.4 1904.6,1475.4 C1912.6,1475.9 1917.6,1478.4 1922.6,1478.4 C1927.6,1478.4 1927.6,1475.4 1934.6,1475.4 C1941.6,1475.7 1955.7,1479.8 1964.7,1480.2 C1973.7,1480.2 1978.8,1477.8 1988.8,1477.8 C1998.8,1478.0 2016.9,1481.4 2024.9,1481.4 C2032.9,1481.0 2032.4,1477.8 2036.9,1475.4 C2041.4,1473.0 2048.0,1467.9 2052.0,1466.9 C2056.0,1466.9 2057.0,1469.3 2061.0,1469.3 C2065.0,1469.3 2067.1,1467.9 2076.1,1466.9 C2085.1,1465.9 2104.7,1463.3 2115.2,1463.3 C2125.7,1463.3 2129.2,1465.7 2139.2,1466.9 C2149.2,1468.1 2166.3,1470.5 2175.3,1470.5 C2184.3,1470.5 2183.4,1466.9 2193.4,1466.9 C2203.4,1467.1 2224.5,1471.0 2235.5,1471.7 C2246.5,1471.7 2251.6,1471.7 2259.6,1471.1 C2267.6,1469.8 2276.6,1464.1 2283.6,1463.9 C2290.6,1463.9 2297.2,1468.0 2301.7,1469.9 C2306.2,1471.8 2307.7,1471.2 2310.7,1475.4 C2313.7,1479.6 2316.7,1492.2 2319.7,1495.2 C2322.7,1495.2 2325.8,1493.4 2328.8,1493.4 C2331.8,1494.2 2334.8,1499.2 2337.8,1500.0 C2340.8,1500.0 2344.3,1498.2 2346.8,1498.2 C2349.3,1498.9 2349.8,1504.2 2352.8,1504.2 C2355.8,1502.7 2360.9,1492.7 2364.9,1489.2 C2368.9,1485.7 2372.4,1483.7 2376.9,1483.2 C2381.4,1483.2 2383.4,1485.9 2391.9,1486.2 C2400.4,1486.2 2417.5,1486.2 2428.0,1485.0 C2438.5,1483.2 2446.6,1477.6 2455.1,1475.4 C2463.6,1473.2 2470.7,1471.7 2479.2,1471.7 C2487.7,1471.8 2495.8,1474.3 2506.3,1476.0 C2516.8,1477.7 2529.9,1481.3 2542.4,1482.0 C2554.9,1482.0 2569.5,1480.2 2581.5,1480.2 C2593.5,1481.1 2604.1,1485.8 2614.6,1487.4 C2625.1,1489.0 2636.7,1488.5 2644.7,1489.8 C2652.7,1491.1 2657.2,1495.2 2662.7,1495.2 C2668.2,1494.8 2671.7,1488.1 2677.7,1487.4 C2683.7,1487.4 2690.3,1491.0 2698.8,1491.0 C2707.3,1490.1 2717.9,1482.6 2728.9,1482.0 C2739.9,1482.0 2749.8,1487.1 2765.0,1487.4 C2780.2,1487.4 2800.8,1485.4 2820.0,1484.0 C2839.2,1482.6 2860.0,1480.3 2880.0,1479.0 C2900.0,1477.7 2920.0,1476.8 2940.0,1476.0 C2960.0,1475.2 2980.0,1474.0 3000.0,1474.0 C3020.0,1474.0 3040.0,1475.0 3060.0,1476.0 C3080.0,1477.0 3100.5,1478.5 3120.0,1480.0 C3139.5,1481.5 3165.1,1483.5 3177.1,1485.0 C3189.1,1486.5 3187.7,1486.5 3192.2,1489.2 C3196.7,1491.9 3200.2,1497.9 3204.2,1501.2 C3208.2,1504.5 3211.4,1506.5 3216.2,1509.0 C3221.0,1511.5 3230.3,1515.1 3233.1,1516.3" fill="none" stroke="#3d5bb8" stroke-width="1.3" clip-path="url(#cl)"/>
<path d="M183.8,1445.9 C190.5,1446.1 215.5,1447.1 224.2,1447.1 C232.9,1446.8 230.7,1444.1 236.2,1444.1 C241.7,1444.8 250.7,1450.5 257.2,1451.3 C263.7,1451.3 269.3,1449.4 275.3,1448.9 C281.3,1448.4 288.3,1448.9 293.3,1448.3 C298.3,1447.3 299.9,1442.9 305.4,1442.9 C310.9,1443.0 318.9,1448.1 326.4,1448.9 C333.9,1448.9 344.0,1447.7 350.5,1447.7 C357.0,1447.9 358.5,1450.1 365.5,1450.1 C372.5,1449.3 385.6,1443.9 392.6,1442.9 C399.6,1442.9 403.7,1443.2 407.7,1444.1 C411.7,1445.0 409.2,1447.0 416.7,1448.3 C424.2,1449.6 444.8,1450.6 452.8,1451.9 C460.8,1453.2 460.3,1454.1 464.8,1456.1 C469.3,1458.1 475.4,1462.4 479.9,1463.9 C484.4,1465.1 487.9,1465.1 491.9,1465.1 C495.9,1464.6 500.4,1461.4 503.9,1460.9 C507.4,1460.9 509.0,1462.1 513.0,1462.1 C517.0,1460.8 523.5,1454.4 528.0,1453.1 C532.5,1453.1 535.0,1454.1 540.0,1454.3 C545.0,1454.3 553.1,1454.3 558.1,1454.3 C563.1,1453.2 564.6,1448.4 570.1,1447.7 C575.6,1447.7 586.2,1449.0 591.2,1450.1 C596.2,1451.2 594.2,1453.1 600.2,1454.3 C606.2,1455.5 620.3,1457.0 627.3,1457.3 C634.3,1457.3 638.3,1456.1 642.3,1456.1 C646.3,1456.5 644.8,1459.3 651.3,1459.7 C657.8,1459.7 673.4,1459.1 681.4,1458.5 C689.4,1457.9 692.5,1456.1 699.5,1456.1 C706.5,1456.4 714.5,1459.6 723.5,1460.3 C732.5,1460.3 746.6,1460.3 753.6,1460.3 C760.6,1459.9 758.7,1457.9 765.7,1457.9 C772.7,1458.2 787.8,1461.0 795.8,1462.1 C803.8,1463.2 806.8,1463.1 813.8,1464.5 C820.8,1465.9 831.4,1470.3 837.9,1470.5 C844.4,1470.5 842.9,1467.1 852.9,1465.7 C862.9,1464.3 887.5,1462.7 898.0,1462.1 C908.5,1462.1 912.1,1462.1 916.1,1462.1 C920.1,1462.7 916.1,1465.1 922.1,1465.7 C928.1,1465.7 939.2,1465.7 952.2,1465.7 C965.2,1465.0 988.3,1461.6 1000.3,1461.5 C1012.3,1461.5 1017.4,1464.0 1024.4,1465.1 C1031.4,1466.2 1033.4,1468.1 1042.4,1468.1 C1051.4,1468.1 1070.5,1465.1 1078.5,1465.1 C1086.5,1465.3 1085.6,1468.8 1090.6,1469.3 C1095.6,1469.3 1099.6,1468.9 1108.6,1468.1 C1117.6,1467.3 1132.7,1465.5 1144.7,1464.5 C1156.7,1463.5 1168.8,1462.3 1180.8,1462.1 C1192.8,1462.1 1206.9,1462.6 1216.9,1463.3 C1226.9,1464.0 1233.9,1466.2 1240.9,1466.3 C1247.9,1466.3 1253.0,1465.6 1259.0,1463.9 C1265.0,1462.2 1271.1,1457.0 1277.1,1456.1 C1283.1,1456.1 1285.2,1458.5 1295.2,1458.5 C1305.2,1458.3 1328.3,1455.9 1337.3,1454.9 C1346.3,1453.9 1344.8,1452.5 1349.3,1452.5 C1353.8,1452.9 1357.4,1456.4 1364.4,1457.3 C1371.4,1457.9 1384.9,1457.3 1391.4,1457.9 C1397.9,1458.7 1398.5,1461.8 1403.5,1462.1 C1408.5,1462.1 1416.5,1460.7 1421.5,1459.7 C1426.5,1458.7 1427.6,1456.5 1433.6,1456.1 C1439.6,1456.1 1450.7,1456.1 1457.7,1457.3 C1464.7,1458.8 1469.7,1463.5 1475.7,1465.1 C1481.7,1466.7 1487.8,1466.4 1493.8,1466.9 C1499.8,1467.4 1506.8,1468.1 1511.8,1468.1 C1516.8,1467.6 1519.8,1463.9 1523.8,1463.9 C1527.8,1464.4 1530.8,1469.4 1535.8,1471.1 C1540.8,1472.8 1546.0,1472.9 1554.0,1474.2 C1562.0,1475.5 1576.0,1477.7 1584.0,1479.0 C1592.0,1480.3 1596.5,1482.0 1602.0,1482.0 C1607.5,1482.0 1612.0,1479.0 1617.0,1479.0 C1622.0,1479.0 1627.1,1482.0 1632.1,1482.0 C1637.1,1481.2 1642.1,1476.3 1647.1,1474.2 C1652.1,1472.1 1658.2,1469.5 1662.2,1469.3 C1666.2,1469.3 1667.7,1472.7 1671.2,1472.9 C1674.7,1472.9 1678.7,1470.5 1683.2,1470.5 C1687.7,1470.5 1691.5,1472.5 1698.3,1472.9 C1705.1,1472.9 1717.8,1472.9 1724.1,1472.9 C1730.4,1472.3 1730.1,1469.3 1736.1,1469.3 C1742.1,1469.8 1753.7,1475.5 1760.2,1476.0 C1766.7,1476.0 1768.2,1473.8 1775.2,1472.3 C1782.2,1470.8 1796.8,1467.3 1802.3,1466.9 C1807.8,1466.9 1805.8,1469.9 1808.3,1469.9 C1810.8,1469.4 1814.3,1464.2 1817.3,1463.9 C1820.3,1463.9 1820.4,1467.6 1826.4,1468.1 C1832.4,1468.1 1845.4,1466.9 1853.4,1466.9 C1861.4,1468.1 1866.0,1474.0 1874.5,1475.4 C1883.0,1475.4 1896.6,1475.4 1904.6,1475.4 C1912.6,1475.9 1917.6,1478.4 1922.6,1478.4 C1927.6,1478.4 1927.6,1475.4 1934.6,1475.4 C1941.6,1475.7 1955.7,1479.8 1964.7,1480.2 C1973.7,1480.2 1978.8,1477.8 1988.8,1477.8 C1998.8,1478.0 2016.9,1481.4 2024.9,1481.4 C2032.9,1481.0 2032.4,1477.8 2036.9,1475.4 C2041.4,1473.0 2048.0,1467.9 2052.0,1466.9 C2056.0,1466.9 2057.0,1469.3 2061.0,1469.3 C2065.0,1469.3 2067.1,1467.9 2076.1,1466.9 C2085.1,1465.9 2104.7,1463.3 2115.2,1463.3 C2125.7,1463.3 2129.2,1465.7 2139.2,1466.9 C2149.2,1468.1 2166.3,1470.5 2175.3,1470.5 C2184.3,1470.5 2183.4,1466.9 2193.4,1466.9 C2203.4,1467.1 2224.5,1471.0 2235.5,1471.7 C2246.5,1471.7 2251.6,1471.7 2259.6,1471.1 C2267.6,1469.8 2276.6,1464.1 2283.6,1463.9 C2290.6,1463.9 2297.2,1468.0 2301.7,1469.9 C2306.2,1471.8 2307.7,1471.2 2310.7,1475.4 C2313.7,1479.6 2316.7,1492.2 2319.7,1495.2 C2322.7,1495.2 2325.8,1493.4 2328.8,1493.4 C2331.8,1494.2 2334.8,1499.2 2337.8,1500.0 C2340.8,1500.0 2344.3,1498.2 2346.8,1498.2 C2349.3,1498.9 2349.8,1504.2 2352.8,1504.2 C2355.8,1502.7 2360.9,1492.7 2364.9,1489.2 C2368.9,1485.7 2372.4,1483.7 2376.9,1483.2 C2381.4,1483.2 2383.4,1485.9 2391.9,1486.2 C2400.4,1486.2 2417.5,1486.2 2428.0,1485.0 C2438.5,1483.2 2446.6,1477.6 2455.1,1475.4 C2463.6,1473.2 2470.7,1471.7 2479.2,1471.7 C2487.7,1471.8 2495.8,1474.3 2506.3,1476.0 C2516.8,1477.7 2529.9,1481.3 2542.4,1482.0 C2554.9,1482.0 2569.5,1480.2 2581.5,1480.2 C2593.5,1481.1 2604.1,1485.8 2614.6,1487.4 C2625.1,1489.0 2636.7,1488.5 2644.7,1489.8 C2652.7,1491.1 2657.2,1495.2 2662.7,1495.2 C2668.2,1494.8 2671.7,1488.1 2677.7,1487.4 C2683.7,1487.4 2690.3,1491.0 2698.8,1491.0 C2707.3,1490.1 2717.9,1482.6 2728.9,1482.0 C2739.9,1482.0 2749.8,1487.1 2765.0,1487.4 C2780.2,1487.4 2800.8,1485.4 2820.0,1484.0 C2839.2,1482.6 2860.0,1480.3 2880.0,1479.0 C2900.0,1477.7 2920.0,1476.8 2940.0,1476.0 C2960.0,1475.2 2980.0,1474.0 3000.0,1474.0 C3020.0,1474.0 3040.0,1475.0 3060.0,1476.0 C3080.0,1477.0 3100.5,1478.5 3120.0,1480.0 C3139.5,1481.5 3165.1,1483.5 3177.1,1485.0 C3189.1,1486.5 3187.7,1486.5 3192.2,1489.2 C3196.7,1491.9 3200.2,1497.9 3204.2,1501.2 C3208.2,1504.5 3211.4,1506.5 3216.2,1509.0 C3221.0,1511.5 3230.3,1515.1 3233.1,1516.3" fill="none" stroke="#8196d6" stroke-width="1.3" clip-path="url(#cr)"/>
<line x1="179" y1="981.0" x2="3229" y2="981.0" stroke="#222429" stroke-width="2" stroke-dasharray="8 4"/>
<line x1="179" y1="1047.3" x2="3229" y2="1047.3" stroke="#222429" stroke-width="2" stroke-dasharray="8 4"/>
<line x1="179" y1="1113.7" x2="3229" y2="1113.7" stroke="#222429" stroke-width="2" stroke-dasharray="8 4"/>
<line x1="179" y1="1180.0" x2="3229" y2="1180.0" stroke="#222429" stroke-width="2" stroke-dasharray="8 4"/>
<line x1="179" y1="1246.3" x2="3229" y2="1246.3" stroke="#222429" stroke-width="2" stroke-dasharray="8 4"/>
<line x1="179" y1="1312.7" x2="3229" y2="1312.7" stroke="#222429" stroke-width="2" stroke-dasharray="8 4"/>
<line x1="179" y1="1379.5" x2="3229" y2="1379.5" stroke="#26282e" stroke-width="2"/>
<line x1="179.0" y1="1379" x2="179.0" y2="1390" stroke="#26282e" stroke-width="2"/>
<line x1="306.1" y1="1379" x2="306.1" y2="1390" stroke="#26282e" stroke-width="2"/>
<line x1="433.2" y1="1379" x2="433.2" y2="1390" stroke="#26282e" stroke-width="2"/>
<line x1="560.2" y1="1379" x2="560.2" y2="1390" stroke="#26282e" stroke-width="2"/>
<line x1="687.3" y1="1379" x2="687.3" y2="1390" stroke="#26282e" stroke-width="2"/>
<line x1="814.4" y1="1379" x2="814.4" y2="1390" stroke="#26282e" stroke-width="2"/>
<line x1="941.5" y1="1379" x2="941.5" y2="1390" stroke="#26282e" stroke-width="2"/>
<line x1="1068.6" y1="1379" x2="1068.6" y2="1390" stroke="#26282e" stroke-width="2"/>
<line x1="1195.6" y1="1379" x2="1195.6" y2="1390" stroke="#26282e" stroke-width="2"/>
<line x1="1322.7" y1="1379" x2="1322.7" y2="1390" stroke="#26282e" stroke-width="2"/>
<line x1="1449.8" y1="1379" x2="1449.8" y2="1390" stroke="#26282e" stroke-width="2"/>
<line x1="1576.9" y1="1379" x2="1576.9" y2="1390" stroke="#26282e" stroke-width="2"/>
<line x1="1704.0" y1="1379" x2="1704.0" y2="1390" stroke="#26282e" stroke-width="2"/>
<line x1="1831.0" y1="1379" x2="1831.0" y2="1390" stroke="#26282e" stroke-width="2"/>
<line x1="1958.1" y1="1379" x2="1958.1" y2="1390" stroke="#26282e" stroke-width="2"/>
<line x1="2085.2" y1="1379" x2="2085.2" y2="1390" stroke="#26282e" stroke-width="2"/>
<line x1="2212.3" y1="1379" x2="2212.3" y2="1390" stroke="#26282e" stroke-width="2"/>
<line x1="2339.4" y1="1379" x2="2339.4" y2="1390" stroke="#26282e" stroke-width="2"/>
<line x1="2466.4" y1="1379" x2="2466.4" y2="1390" stroke="#26282e" stroke-width="2"/>
<line x1="2593.5" y1="1379" x2="2593.5" y2="1390" stroke="#26282e" stroke-width="2"/>
<line x1="2720.6" y1="1379" x2="2720.6" y2="1390" stroke="#26282e" stroke-width="2"/>
<line x1="2847.7" y1="1379" x2="2847.7" y2="1390" stroke="#26282e" stroke-width="2"/>
<line x1="2974.8" y1="1379" x2="2974.8" y2="1390" stroke="#26282e" stroke-width="2"/>
<line x1="3101.8" y1="1379" x2="3101.8" y2="1390" stroke="#26282e" stroke-width="2"/>
<line x1="3228.9" y1="1379" x2="3228.9" y2="1390" stroke="#26282e" stroke-width="2"/>
<path d="M184.1,1318.9 C209.0,1319.0 305.6,1319.6 333.6,1319.6 C352.2,1318.0 347.6,1316.5 352.2,1309.6 C356.8,1302.7 357.8,1283.3 361.5,1278.0 C365.2,1278.0 370.5,1278.0 374.5,1278.0 C378.5,1277.4 382.3,1274.2 385.7,1274.2 C389.1,1274.2 391.9,1274.3 395.0,1278.0 C398.1,1281.7 400.9,1291.0 404.3,1296.6 C407.7,1302.2 411.7,1308.3 415.4,1311.4 C419.1,1314.5 423.2,1315.1 426.6,1315.1 C430.0,1315.1 432.8,1315.1 435.9,1311.4 C439.0,1295.0 442.7,1232.7 445.2,1216.6 C447.7,1214.7 447.1,1214.7 450.8,1214.7 C454.5,1217.8 463.2,1226.2 467.5,1235.2 C471.8,1244.2 473.7,1255.4 476.8,1268.7 C479.9,1282.0 483.9,1306.7 486.1,1315.1 C488.3,1318.9 486.1,1318.3 489.8,1318.9 C503.1,1318.9 552.5,1318.9 566.1,1318.9 C571.6,1302.5 570.1,1241.4 571.6,1220.3 C573.1,1199.2 573.8,1193.6 575.3,1192.4 C576.8,1192.4 578.7,1203.9 580.9,1212.9 C583.1,1221.9 585.3,1237.1 588.4,1246.4 C591.5,1255.7 595.8,1260.0 599.5,1268.7 C603.2,1277.4 607.3,1292.8 610.7,1298.4 C614.1,1302.1 616.6,1301.5 620.0,1302.1 C623.4,1302.1 626.8,1302.1 631.1,1302.1 C635.4,1304.7 635.8,1314.9 646.0,1317.7 C656.2,1318.9 683.8,1318.9 692.5,1318.9 C698.1,1308.9 695.9,1269.6 698.1,1257.5 C700.3,1246.4 701.8,1250.7 705.5,1246.4 C709.2,1242.1 715.1,1234.6 720.4,1231.5 C725.7,1228.4 733.1,1227.8 737.1,1227.8 C741.1,1231.5 741.2,1242.6 744.6,1253.8 C748.0,1265.0 753.3,1284.0 757.6,1294.7 C761.9,1305.4 760.4,1313.7 770.6,1317.7 C780.8,1318.9 809.9,1318.9 818.9,1318.9 C824.5,1312.0 822.6,1290.8 824.5,1276.1 C826.4,1261.4 828.2,1235.7 830.1,1230.7 C832.0,1230.7 832.6,1237.6 835.7,1246.4 C838.8,1255.2 844.4,1277.9 848.7,1283.5 C853.0,1283.5 858.2,1279.8 861.7,1279.8 C865.2,1281.7 866.8,1293.0 870.0,1294.7 C873.2,1294.7 876.6,1291.3 881.2,1290.2 C885.9,1289.1 891.1,1290.2 897.9,1288.0 C904.7,1285.7 915.6,1279.0 922.1,1276.1 C928.6,1273.2 932.0,1271.1 936.9,1270.5 C941.8,1270.5 948.1,1270.5 951.8,1272.4 C955.5,1277.7 956.8,1294.7 959.3,1302.1 C961.8,1309.5 963.6,1316.2 966.7,1317.0 C969.8,1317.0 972.8,1306.6 977.8,1306.6 C982.8,1306.6 977.8,1315.0 996.4,1317.0 C1023.4,1318.9 1114.8,1318.9 1139.6,1318.9 C1145.2,1317.1 1142.4,1309.6 1145.2,1305.9 C1148.0,1302.2 1150.8,1297.2 1156.4,1296.6 C1162.0,1296.6 1172.2,1301.2 1178.7,1302.1 C1185.2,1302.1 1191.4,1302.1 1195.4,1302.1 C1199.4,1298.4 1200.0,1294.0 1202.8,1279.8 C1205.6,1265.5 1209.0,1232.6 1212.1,1216.6 C1215.2,1200.6 1218.6,1184.5 1221.4,1183.9 C1224.2,1183.9 1226.4,1196.9 1228.9,1212.9 C1231.4,1228.9 1233.5,1266.9 1236.3,1279.8 C1239.1,1290.2 1242.5,1288.7 1245.6,1290.2 C1248.7,1290.2 1252.1,1290.2 1254.9,1289.1 C1257.7,1287.1 1258.9,1279.5 1262.3,1278.0 C1265.7,1278.0 1270.9,1279.5 1275.3,1279.8 C1279.7,1279.8 1285.3,1279.8 1288.4,1279.8 C1291.5,1281.2 1290.5,1286.6 1293.9,1288.0 C1297.3,1288.0 1305.1,1288.0 1308.8,1288.0 C1312.5,1287.4 1312.9,1284.5 1316.3,1284.3 C1319.7,1284.3 1326.5,1284.3 1329.3,1286.5 C1332.1,1289.5 1331.8,1296.8 1333.0,1302.1 C1334.2,1307.4 1333.0,1315.3 1336.7,1318.1 C1348.8,1318.9 1392.2,1318.9 1405.5,1318.9 C1416.7,1316.9 1411.7,1313.0 1416.7,1305.9 C1421.7,1298.8 1430.3,1282.6 1435.3,1276.1 C1440.2,1269.6 1443.3,1271.8 1446.4,1266.8 C1449.5,1261.8 1452.0,1260.4 1453.9,1246.4 C1455.8,1232.5 1456.4,1223.4 1457.6,1183.1 C1458.8,1142.8 1459.8,1036.5 1461.3,1004.6 C1462.8,991.6 1464.4,992.8 1466.9,991.6 C1469.4,991.6 1473.4,991.6 1476.2,997.2 C1479.0,1004.3 1479.9,1014.6 1483.6,1034.4 C1487.3,1054.2 1492.9,1092.7 1498.5,1116.2 C1504.1,1139.8 1512.1,1163.6 1517.1,1175.7 C1522.1,1187.8 1524.6,1184.5 1528.3,1188.7 C1532.0,1192.9 1535.7,1199.8 1539.4,1201.0 C1543.1,1201.0 1545.4,1196.1 1550.5,1196.1 C1555.6,1199.9 1565.1,1217.2 1569.9,1224.0 C1574.7,1230.8 1576.8,1231.4 1579.3,1237.0 C1581.8,1242.6 1583.4,1244.8 1584.9,1257.5 C1586.5,1270.2 1587.4,1303.0 1588.6,1313.3 C1589.8,1319.2 1588.6,1318.3 1592.3,1319.2 C1709.6,1319.2 2174.1,1319.2 2292.3,1318.9 C2301.6,1318.2 2298.5,1315.1 2301.6,1315.1 C2304.7,1315.1 2301.6,1318.3 2310.9,1318.9 C2350.3,1318.9 2498.8,1318.9 2537.8,1318.9 C2545.2,1314.9 2542.4,1304.4 2545.2,1294.7 C2548.0,1285.0 2551.4,1266.0 2554.5,1260.5 C2557.6,1260.5 2559.8,1260.5 2563.8,1262.0 C2567.8,1264.6 2573.1,1270.6 2578.7,1276.1 C2584.3,1281.5 2592.7,1287.7 2597.3,1294.7 C2602.0,1301.7 2597.3,1314.2 2606.6,1318.1 C2617.8,1318.1 2653.4,1318.1 2664.2,1318.1 C2671.6,1315.8 2668.5,1306.8 2671.6,1304.0 C2674.7,1301.4 2679.7,1301.4 2682.8,1301.4 C2685.9,1302.3 2687.1,1308.1 2690.2,1309.6 C2693.3,1310.3 2695.5,1310.3 2701.4,1310.3 C2707.3,1309.2 2720.0,1302.9 2725.6,1302.9 C2731.2,1304.2 2725.8,1315.6 2734.9,1318.1 C2744.0,1318.1 2742.5,1318.1 2780.0,1318.1 C2817.5,1318.2 2925.9,1318.4 2960.0,1318.5 C2984.5,1318.5 2980.1,1318.5 2984.5,1318.5 C2986.2,1307.1 2985.5,1267.3 2986.2,1250.3 C2986.9,1233.3 2987.2,1226.0 2988.6,1216.4 C2990.0,1206.8 2992.7,1197.4 2994.7,1192.8 C2996.7,1188.7 2998.6,1188.7 3000.8,1188.7 C3003.1,1189.0 3005.5,1190.5 3008.2,1194.5 C3010.8,1198.5 3013.0,1204.3 3016.7,1213.0 C3020.4,1221.7 3024.6,1234.1 3030.2,1246.9 C3035.8,1259.7 3045.5,1278.0 3050.5,1289.8 C3055.5,1301.6 3050.5,1313.3 3060.0,1318.0 C3088.8,1318.0 3195.8,1317.9 3223.0,1317.9 L3223,1379 L184.1,1379 Z" fill="#437f72"/>
<path d="M184.1,1318.9 C209.0,1319.0 305.6,1319.6 333.6,1319.6 C352.2,1318.0 347.6,1316.5 352.2,1309.6 C356.8,1302.7 357.8,1283.3 361.5,1278.0 C365.2,1278.0 370.5,1278.0 374.5,1278.0 C378.5,1277.4 382.3,1274.2 385.7,1274.2 C389.1,1274.2 391.9,1274.3 395.0,1278.0 C398.1,1281.7 400.9,1291.0 404.3,1296.6 C407.7,1302.2 411.7,1308.3 415.4,1311.4 C419.1,1314.5 423.2,1315.1 426.6,1315.1 C430.0,1315.1 432.8,1315.1 435.9,1311.4 C439.0,1295.0 442.7,1232.7 445.2,1216.6 C447.7,1214.7 447.1,1214.7 450.8,1214.7 C454.5,1217.8 463.2,1226.2 467.5,1235.2 C471.8,1244.2 473.7,1255.4 476.8,1268.7 C479.9,1282.0 483.9,1306.7 486.1,1315.1 C488.3,1318.9 486.1,1318.3 489.8,1318.9 C503.1,1318.9 552.5,1318.9 566.1,1318.9 C571.6,1302.5 570.1,1241.4 571.6,1220.3 C573.1,1199.2 573.8,1193.6 575.3,1192.4 C576.8,1192.4 578.7,1203.9 580.9,1212.9 C583.1,1221.9 585.3,1237.1 588.4,1246.4 C591.5,1255.7 595.8,1260.0 599.5,1268.7 C603.2,1277.4 607.3,1292.8 610.7,1298.4 C614.1,1302.1 616.6,1301.5 620.0,1302.1 C623.4,1302.1 626.8,1302.1 631.1,1302.1 C635.4,1304.7 635.8,1314.9 646.0,1317.7 C656.2,1318.9 683.8,1318.9 692.5,1318.9 C698.1,1308.9 695.9,1269.6 698.1,1257.5 C700.3,1246.4 701.8,1250.7 705.5,1246.4 C709.2,1242.1 715.1,1234.6 720.4,1231.5 C725.7,1228.4 733.1,1227.8 737.1,1227.8 C741.1,1231.5 741.2,1242.6 744.6,1253.8 C748.0,1265.0 753.3,1284.0 757.6,1294.7 C761.9,1305.4 760.4,1313.7 770.6,1317.7 C780.8,1318.9 809.9,1318.9 818.9,1318.9 C824.5,1312.0 822.6,1290.8 824.5,1276.1 C826.4,1261.4 828.2,1235.7 830.1,1230.7 C832.0,1230.7 832.6,1237.6 835.7,1246.4 C838.8,1255.2 844.4,1277.9 848.7,1283.5 C853.0,1283.5 858.2,1279.8 861.7,1279.8 C865.2,1281.7 866.8,1293.0 870.0,1294.7 C873.2,1294.7 876.6,1291.3 881.2,1290.2 C885.9,1289.1 891.1,1290.2 897.9,1288.0 C904.7,1285.7 915.6,1279.0 922.1,1276.1 C928.6,1273.2 932.0,1271.1 936.9,1270.5 C941.8,1270.5 948.1,1270.5 951.8,1272.4 C955.5,1277.7 956.8,1294.7 959.3,1302.1 C961.8,1309.5 963.6,1316.2 966.7,1317.0 C969.8,1317.0 972.8,1306.6 977.8,1306.6 C982.8,1306.6 977.8,1315.0 996.4,1317.0 C1023.4,1318.9 1114.8,1318.9 1139.6,1318.9 C1145.2,1317.1 1142.4,1309.6 1145.2,1305.9 C1148.0,1302.2 1150.8,1297.2 1156.4,1296.6 C1162.0,1296.6 1172.2,1301.2 1178.7,1302.1 C1185.2,1302.1 1191.4,1302.1 1195.4,1302.1 C1199.4,1298.4 1200.0,1294.0 1202.8,1279.8 C1205.6,1265.5 1209.0,1232.6 1212.1,1216.6 C1215.2,1200.6 1218.6,1184.5 1221.4,1183.9 C1224.2,1183.9 1226.4,1196.9 1228.9,1212.9 C1231.4,1228.9 1233.5,1266.9 1236.3,1279.8 C1239.1,1290.2 1242.5,1288.7 1245.6,1290.2 C1248.7,1290.2 1252.1,1290.2 1254.9,1289.1 C1257.7,1287.1 1258.9,1279.5 1262.3,1278.0 C1265.7,1278.0 1270.9,1279.5 1275.3,1279.8 C1279.7,1279.8 1285.3,1279.8 1288.4,1279.8 C1291.5,1281.2 1290.5,1286.6 1293.9,1288.0 C1297.3,1288.0 1305.1,1288.0 1308.8,1288.0 C1312.5,1287.4 1312.9,1284.5 1316.3,1284.3 C1319.7,1284.3 1326.5,1284.3 1329.3,1286.5 C1332.1,1289.5 1331.8,1296.8 1333.0,1302.1 C1334.2,1307.4 1333.0,1315.3 1336.7,1318.1 C1348.8,1318.9 1392.2,1318.9 1405.5,1318.9 C1416.7,1316.9 1411.7,1313.0 1416.7,1305.9 C1421.7,1298.8 1430.3,1282.6 1435.3,1276.1 C1440.2,1269.6 1443.3,1271.8 1446.4,1266.8 C1449.5,1261.8 1452.0,1260.4 1453.9,1246.4 C1455.8,1232.5 1456.4,1223.4 1457.6,1183.1 C1458.8,1142.8 1459.8,1036.5 1461.3,1004.6 C1462.8,991.6 1464.4,992.8 1466.9,991.6 C1469.4,991.6 1473.4,991.6 1476.2,997.2 C1479.0,1004.3 1479.9,1014.6 1483.6,1034.4 C1487.3,1054.2 1492.9,1092.7 1498.5,1116.2 C1504.1,1139.8 1512.1,1163.6 1517.1,1175.7 C1522.1,1187.8 1524.6,1184.5 1528.3,1188.7 C1532.0,1192.9 1535.7,1199.8 1539.4,1201.0 C1543.1,1201.0 1545.4,1196.1 1550.5,1196.1 C1555.6,1199.9 1565.1,1217.2 1569.9,1224.0 C1574.7,1230.8 1576.8,1231.4 1579.3,1237.0 C1581.8,1242.6 1583.4,1244.8 1584.9,1257.5 C1586.5,1270.2 1587.4,1303.0 1588.6,1313.3 C1589.8,1319.2 1588.6,1318.3 1592.3,1319.2 C1709.6,1319.2 2174.1,1319.2 2292.3,1318.9 C2301.6,1318.2 2298.5,1315.1 2301.6,1315.1 C2304.7,1315.1 2301.6,1318.3 2310.9,1318.9 C2350.3,1318.9 2498.8,1318.9 2537.8,1318.9 C2545.2,1314.9 2542.4,1304.4 2545.2,1294.7 C2548.0,1285.0 2551.4,1266.0 2554.5,1260.5 C2557.6,1260.5 2559.8,1260.5 2563.8,1262.0 C2567.8,1264.6 2573.1,1270.6 2578.7,1276.1 C2584.3,1281.5 2592.7,1287.7 2597.3,1294.7 C2602.0,1301.7 2597.3,1314.2 2606.6,1318.1 C2617.8,1318.1 2653.4,1318.1 2664.2,1318.1 C2671.6,1315.8 2668.5,1306.8 2671.6,1304.0 C2674.7,1301.4 2679.7,1301.4 2682.8,1301.4 C2685.9,1302.3 2687.1,1308.1 2690.2,1309.6 C2693.3,1310.3 2695.5,1310.3 2701.4,1310.3 C2707.3,1309.2 2720.0,1302.9 2725.6,1302.9 C2731.2,1304.2 2725.8,1315.6 2734.9,1318.1 C2744.0,1318.1 2742.5,1318.1 2780.0,1318.1 C2817.5,1318.2 2925.9,1318.4 2960.0,1318.5 C2984.5,1318.5 2980.1,1318.5 2984.5,1318.5 C2986.2,1307.1 2985.5,1267.3 2986.2,1250.3 C2986.9,1233.3 2987.2,1226.0 2988.6,1216.4 C2990.0,1206.8 2992.7,1197.4 2994.7,1192.8 C2996.7,1188.7 2998.6,1188.7 3000.8,1188.7 C3003.1,1189.0 3005.5,1190.5 3008.2,1194.5 C3010.8,1198.5 3013.0,1204.3 3016.7,1213.0 C3020.4,1221.7 3024.6,1234.1 3030.2,1246.9 C3035.8,1259.7 3045.5,1278.0 3050.5,1289.8 C3055.5,1301.6 3050.5,1313.3 3060.0,1318.0 C3088.8,1318.0 3195.8,1317.9 3223.0,1317.9" fill="none" stroke="#5abba1" stroke-width="2.2"/>
<text x="3198" y="1340" text-anchor="end" font-family="Liberation Sans" font-weight="700" font-size="25" fill="rgba(235,240,240,0.6)">SS</text>
<line x1="184" y1="1379.5" x2="3223" y2="1379.5" stroke="#5e1c24" stroke-width="1.2"/>
<path d="M184.1,1139.2 C187.6,1138.5 200.2,1134.8 205.3,1134.8 C210.4,1135.1 209.3,1141.1 214.6,1141.1 C219.9,1141.0 231.6,1134.5 236.9,1134.0 C242.2,1134.0 242.8,1135.9 246.2,1137.8 C249.6,1139.7 253.4,1143.7 257.4,1145.2 C261.4,1146.7 266.4,1145.6 270.4,1146.7 C274.4,1147.8 277.9,1151.1 281.6,1151.9 C285.3,1151.9 289.6,1151.9 292.7,1151.5 C295.8,1150.0 296.8,1144.5 300.2,1143.0 C303.6,1142.2 309.5,1142.2 313.2,1142.2 C316.9,1143.1 319.1,1148.2 322.5,1148.2 C325.9,1148.2 328.7,1143.9 333.6,1142.2 C338.6,1140.5 347.2,1140.0 352.2,1137.8 C357.2,1135.6 359.7,1129.2 363.4,1129.2 C367.1,1129.3 370.8,1138.5 374.5,1138.5 C378.2,1137.6 382.0,1126.6 385.7,1123.6 C389.4,1120.7 393.8,1120.7 396.9,1120.7 C400.0,1122.1 399.4,1130.2 404.3,1131.8 C409.2,1131.8 421.0,1130.3 426.6,1130.3 C432.2,1130.5 434.1,1133.3 437.8,1133.3 C441.5,1133.3 443.3,1131.0 448.9,1130.3 C454.5,1129.6 465.6,1129.2 471.2,1129.2 C476.8,1130.5 478.7,1135.6 482.4,1137.8 C486.1,1140.0 490.1,1140.3 493.5,1142.2 C496.9,1144.1 499.1,1147.5 502.8,1148.9 C506.5,1150.3 512.5,1149.7 515.9,1150.4 C519.3,1151.2 520.5,1153.4 523.3,1153.4 C526.1,1153.3 529.5,1149.8 532.6,1149.7 C535.7,1149.7 538.5,1152.6 541.9,1152.6 C545.3,1152.2 549.3,1147.4 553.0,1147.4 C556.7,1147.5 560.5,1153.4 564.2,1153.4 C567.9,1152.9 569.4,1145.9 575.3,1144.5 C581.2,1144.5 594.2,1144.5 599.5,1145.2 C604.8,1146.8 603.6,1152.4 607.0,1154.1 C610.4,1155.2 616.6,1155.2 620.0,1155.2 C623.4,1154.0 622.4,1147.0 627.4,1146.7 C632.4,1146.7 643.5,1152.2 649.7,1153.4 C655.9,1154.1 659.6,1153.4 664.6,1154.1 C669.6,1155.8 674.5,1161.9 679.5,1163.8 C684.5,1165.3 688.8,1165.3 694.4,1165.3 C700.0,1164.8 707.4,1161.7 713.0,1160.8 C718.6,1160.1 724.1,1160.8 727.8,1160.1 C731.5,1159.2 730.3,1156.0 735.3,1155.6 C740.3,1155.6 752.6,1156.6 757.6,1157.8 C762.6,1159.0 761.3,1161.7 765.0,1162.7 C768.7,1163.7 776.2,1163.8 779.9,1163.8 C783.6,1163.5 783.6,1161.0 787.3,1160.8 C791.0,1160.8 798.5,1161.7 802.2,1162.7 C805.9,1163.7 806.5,1166.4 809.6,1166.8 C812.7,1166.8 817.7,1166.8 820.8,1165.3 C823.9,1162.8 825.1,1154.3 828.2,1151.5 C831.3,1148.7 835.4,1148.8 839.4,1148.2 C843.4,1147.8 848.7,1148.2 852.4,1147.8 C856.1,1144.9 858.8,1132.3 861.7,1131.1 C864.6,1131.1 866.8,1140.4 870.0,1140.4 C873.2,1140.3 875.6,1131.2 881.2,1130.3 C886.8,1130.3 896.7,1134.7 903.5,1134.8 C910.3,1134.8 914.7,1131.6 922.1,1131.1 C929.5,1131.1 942.5,1131.8 948.1,1131.8 C953.7,1130.4 952.1,1123.8 955.5,1122.9 C958.9,1122.9 962.9,1126.6 968.5,1126.6 C974.1,1125.6 984.0,1117.1 989.0,1116.9 C994.0,1116.9 994.9,1124.5 998.3,1125.5 C1001.7,1125.5 1005.5,1122.9 1009.5,1122.9 C1013.5,1123.5 1017.5,1127.4 1022.5,1129.2 C1027.5,1131.0 1034.2,1133.7 1039.2,1134.0 C1044.2,1134.0 1046.6,1131.1 1052.2,1131.1 C1057.8,1131.7 1067.1,1137.1 1072.7,1137.8 C1078.3,1137.8 1082.3,1135.5 1085.7,1135.5 C1089.1,1135.9 1090.0,1140.0 1093.1,1140.4 C1096.2,1140.4 1100.6,1137.8 1104.3,1137.8 C1108.0,1137.9 1111.1,1141.1 1115.4,1141.1 C1119.7,1140.7 1125.0,1137.5 1130.3,1135.5 C1135.6,1133.5 1140.8,1129.6 1147.0,1129.2 C1153.2,1129.2 1161.0,1132.5 1167.5,1132.9 C1174.0,1132.9 1179.9,1131.8 1186.1,1131.8 C1192.3,1132.0 1198.5,1134.0 1204.7,1134.0 C1210.9,1133.9 1218.7,1131.1 1223.3,1131.1 C1227.9,1132.0 1227.0,1137.8 1232.6,1139.2 C1238.2,1139.2 1250.0,1139.2 1256.8,1139.2 C1263.6,1139.4 1269.2,1140.4 1273.5,1140.4 C1277.8,1139.5 1278.8,1134.8 1282.8,1134.0 C1286.8,1134.0 1293.4,1135.5 1297.7,1135.5 C1302.0,1135.0 1305.4,1132.1 1308.8,1131.1 C1312.2,1130.0 1315.0,1131.1 1318.1,1129.2 C1321.2,1127.2 1323.7,1119.2 1327.4,1119.2 C1331.1,1120.0 1334.2,1130.9 1340.4,1134.0 C1346.6,1137.1 1358.7,1135.8 1364.6,1137.8 C1370.5,1139.8 1372.4,1140.8 1375.8,1145.9 C1379.2,1151.0 1381.3,1158.4 1385.0,1168.3 C1388.7,1178.2 1395.0,1199.3 1398.1,1205.4 C1401.2,1205.4 1401.2,1205.4 1403.7,1204.7 C1406.2,1202.5 1409.6,1192.6 1413.0,1192.4 C1416.4,1192.4 1421.0,1200.3 1424.1,1203.6 C1427.2,1206.9 1427.3,1211.0 1431.6,1212.1 C1435.9,1212.1 1445.8,1210.5 1450.1,1209.9 C1454.4,1209.3 1454.8,1208.4 1457.6,1208.4 C1460.4,1210.5 1464.1,1222.1 1466.9,1222.2 C1469.7,1222.2 1470.9,1215.8 1474.3,1209.2 C1477.7,1202.6 1483.3,1187.7 1487.3,1182.4 C1491.3,1177.6 1495.1,1179.6 1498.5,1177.6 C1501.9,1175.5 1504.7,1170.1 1507.8,1170.1 C1510.9,1170.4 1511.8,1177.9 1517.1,1179.4 C1522.4,1179.4 1534.1,1179.4 1539.4,1179.4 C1544.7,1178.3 1543.6,1173.4 1548.7,1172.7 C1553.8,1172.7 1564.6,1174.8 1570.0,1175.0 C1575.4,1175.0 1577.5,1173.8 1581.2,1173.8 C1584.9,1173.8 1588.6,1175.0 1592.3,1175.0 C1596.0,1175.0 1599.5,1173.9 1603.5,1173.8 C1607.5,1173.8 1612.8,1174.2 1616.5,1174.2 C1620.2,1172.5 1621.1,1166.8 1625.8,1163.8 C1630.5,1160.8 1637.9,1159.6 1644.4,1156.4 C1650.9,1153.2 1659.2,1145.6 1664.8,1144.5 C1670.4,1144.5 1673.9,1149.7 1677.8,1149.7 C1681.7,1149.3 1684.9,1142.2 1688.3,1142.2 C1691.7,1142.2 1693.2,1149.7 1698.3,1149.7 C1703.4,1149.2 1712.0,1139.2 1718.8,1139.2 C1725.6,1139.3 1732.1,1149.0 1739.2,1150.4 C1746.3,1150.4 1754.4,1147.8 1761.5,1147.8 C1768.6,1148.6 1776.4,1153.7 1782.0,1155.2 C1787.6,1156.8 1790.0,1155.2 1795.0,1157.1 C1800.0,1159.1 1806.8,1166.3 1811.7,1167.5 C1816.7,1167.5 1820.4,1164.7 1824.7,1164.5 C1829.0,1164.5 1834.4,1164.7 1837.8,1166.4 C1841.2,1168.2 1841.5,1173.8 1845.2,1175.0 C1848.9,1175.0 1856.4,1174.6 1860.1,1173.8 C1863.8,1173.0 1862.5,1170.1 1867.5,1170.1 C1872.5,1170.1 1883.0,1173.8 1889.8,1173.8 C1896.6,1173.8 1903.4,1172.1 1908.4,1170.1 C1913.4,1168.1 1915.6,1162.8 1919.6,1161.9 C1923.6,1161.9 1928.3,1163.0 1932.6,1164.5 C1936.9,1166.0 1941.9,1170.0 1945.6,1171.2 C1949.3,1172.0 1952.4,1171.2 1954.9,1172.0 C1957.4,1173.5 1957.4,1178.8 1960.5,1180.2 C1963.6,1180.2 1969.8,1180.2 1973.5,1180.2 C1977.2,1181.1 1977.5,1185.0 1982.8,1185.4 C1988.1,1185.4 1999.8,1182.4 2005.1,1182.4 C2010.4,1183.0 2010.1,1188.3 2014.4,1188.7 C2018.7,1188.7 2025.5,1186.0 2031.1,1185.0 C2036.7,1184.0 2043.6,1182.4 2047.9,1182.4 C2052.2,1183.3 2053.5,1189.1 2057.2,1190.6 C2060.9,1191.3 2066.8,1190.6 2070.2,1191.3 C2073.6,1193.0 2073.9,1199.9 2077.6,1201.0 C2081.3,1201.0 2087.2,1201.0 2092.5,1198.0 C2097.8,1194.3 2104.5,1180.4 2109.2,1178.7 C2113.8,1178.7 2116.7,1185.1 2120.4,1187.6 C2124.1,1190.1 2127.9,1193.3 2131.6,1193.5 C2135.3,1193.5 2138.7,1189.3 2142.7,1188.7 C2146.7,1188.7 2152.0,1189.8 2155.7,1189.8 C2159.4,1189.4 2161.3,1186.7 2165.0,1186.1 C2168.7,1186.1 2173.7,1186.1 2178.0,1186.1 C2182.3,1184.4 2185.1,1178.9 2191.0,1175.7 C2196.9,1172.5 2208.4,1167.9 2213.4,1166.8 C2218.4,1166.8 2218.3,1167.8 2220.8,1169.0 C2223.3,1170.2 2225.1,1173.0 2228.2,1173.8 C2231.3,1173.8 2236.0,1173.8 2239.4,1173.8 C2242.8,1174.6 2245.0,1178.3 2248.7,1178.7 C2252.4,1178.7 2258.1,1176.6 2261.7,1176.4 C2265.2,1176.4 2266.1,1176.4 2270.0,1177.6 C2273.9,1179.5 2280.9,1186.0 2284.9,1187.6 C2288.9,1187.6 2291.4,1187.6 2294.2,1186.9 C2297.0,1186.2 2298.5,1183.4 2301.6,1183.1 C2304.7,1183.1 2309.1,1185.0 2312.8,1185.0 C2316.5,1184.5 2320.5,1180.2 2323.9,1180.2 C2327.3,1180.2 2329.5,1184.0 2333.2,1185.0 C2336.9,1186.0 2342.5,1185.0 2346.2,1186.1 C2349.9,1187.6 2352.1,1193.9 2355.5,1194.3 C2358.9,1194.3 2362.6,1190.1 2366.9,1188.7 C2371.2,1187.3 2376.7,1187.9 2381.6,1186.1 C2386.5,1184.2 2391.8,1178.6 2396.4,1177.6 C2401.1,1177.6 2404.2,1180.2 2409.5,1180.2 C2414.8,1179.6 2423.4,1174.2 2428.0,1173.8 C2432.6,1173.8 2432.0,1177.2 2437.3,1177.6 C2442.6,1177.6 2454.1,1177.6 2459.7,1176.4 C2465.3,1175.2 2465.2,1171.5 2470.8,1170.5 C2476.4,1170.5 2488.1,1170.5 2493.1,1170.5 C2498.1,1172.9 2496.9,1182.0 2500.6,1185.0 C2504.3,1188.0 2511.4,1186.0 2515.4,1188.7 C2519.4,1191.4 2520.3,1199.8 2524.7,1201.0 C2529.0,1201.0 2536.5,1200.2 2541.5,1196.1 C2546.5,1192.0 2548.6,1179.5 2554.5,1176.4 C2560.4,1176.4 2571.5,1176.4 2576.8,1177.6 C2582.1,1178.8 2581.8,1182.7 2586.1,1183.9 C2590.4,1185.0 2598.8,1183.9 2602.8,1185.0 C2606.8,1186.1 2607.5,1190.4 2610.3,1190.6 C2613.1,1190.6 2615.9,1186.2 2619.6,1186.1 C2623.3,1186.1 2628.9,1189.8 2632.6,1189.8 C2636.3,1189.6 2638.8,1187.3 2641.9,1185.0 C2645.0,1182.7 2648.1,1176.5 2651.2,1175.7 C2654.3,1175.7 2655.2,1180.2 2660.5,1180.2 C2665.8,1180.2 2677.5,1175.7 2682.8,1175.7 C2688.1,1176.2 2686.5,1182.0 2692.1,1183.1 C2697.7,1183.1 2708.6,1182.7 2716.3,1182.4 C2724.1,1182.1 2733.0,1182.4 2738.6,1181.3 C2744.2,1179.9 2743.2,1176.7 2749.7,1173.8 C2756.2,1170.9 2771.1,1164.6 2777.6,1163.8 C2784.1,1163.8 2785.1,1168.9 2788.8,1169.0 C2792.5,1169.0 2795.9,1164.5 2799.9,1164.5 C2803.9,1165.1 2808.0,1169.9 2813.0,1172.7 C2818.0,1175.5 2823.5,1180.5 2829.7,1181.3 C2835.9,1181.3 2843.0,1177.6 2850.1,1177.6 C2857.2,1177.6 2867.1,1181.3 2872.4,1181.3 C2877.7,1180.4 2877.3,1173.4 2881.7,1172.0 C2886.0,1172.0 2894.5,1172.7 2898.5,1172.7 C2902.5,1171.5 2901.0,1166.5 2905.9,1164.5 C2910.8,1162.5 2922.9,1162.6 2928.2,1160.8 C2933.5,1159.0 2932.6,1153.4 2937.5,1153.4 C2942.4,1153.8 2952.5,1162.5 2957.5,1163.3 C2962.5,1163.3 2963.4,1159.1 2967.6,1158.3 C2971.8,1158.3 2978.9,1158.3 2982.9,1158.3 C2986.9,1157.8 2986.2,1156.2 2991.3,1155.6 C2996.4,1155.0 3007.4,1154.9 3013.3,1154.9 C3019.2,1156.1 3022.0,1161.0 3026.8,1163.0 C3031.6,1165.0 3035.5,1165.9 3042.0,1166.7 C3048.5,1167.5 3060.3,1167.0 3065.7,1168.1 C3071.1,1169.2 3070.8,1172.9 3074.2,1173.5 C3077.6,1173.5 3081.2,1171.8 3086.0,1171.8 C3090.8,1172.1 3097.0,1174.6 3102.9,1175.2 C3108.8,1175.2 3115.3,1175.2 3121.5,1175.2 C3127.7,1177.3 3135.3,1184.3 3140.1,1187.7 C3144.9,1191.1 3147.2,1191.0 3150.3,1195.5 C3153.4,1200.0 3155.3,1210.7 3158.7,1214.7 C3162.1,1218.8 3166.6,1216.4 3170.5,1219.8 C3174.4,1223.2 3177.3,1231.9 3182.4,1235.0 C3187.5,1238.1 3196.5,1236.4 3201.0,1238.4 C3205.5,1240.4 3205.7,1243.9 3209.4,1246.9 C3213.1,1249.9 3220.7,1254.7 3223.0,1256.3" fill="none" stroke="#f1c860" stroke-width="2"/>
<line x1="179" y1="1249" x2="3223" y2="1249" stroke="#e8e8e8" stroke-width="2" stroke-dasharray="8 4"/>
<line x1="3223" y1="980" x2="3223" y2="1379" stroke="#c4c4c4" stroke-width="2" stroke-dasharray="8 4"/>
<circle cx="3223" cy="1256" r="9" fill="#ffffff" stroke="#e6b955" stroke-width="4.5"/>
<circle cx="3223" cy="1312.6" r="9" fill="#ffffff" stroke="#55b499" stroke-width="4.5"/>
</svg>
<div class="t" style="right:3209.0px;top:969.0px;font-size:22.5px;line-height:22.5px;color:#a4a8ae;font-weight:400;">0.0600%</div>
<div class="t" style="right:3209.0px;top:1035.3px;font-size:22.5px;line-height:22.5px;color:#a4a8ae;font-weight:400;">0.0500%</div>
<div class="t" style="right:3209.0px;top:1101.6px;font-size:22.5px;line-height:22.5px;color:#a4a8ae;font-weight:400;">0.0400%</div>
<div class="t" style="right:3209.0px;top:1167.9px;font-size:22.5px;line-height:22.5px;color:#a4a8ae;font-weight:400;">0.0300%</div>
<div class="t" style="right:3209.0px;top:1234.3px;font-size:22.5px;line-height:22.5px;color:#a4a8ae;font-weight:400;">0.0200%</div>
<div class="t" style="right:3209.0px;top:1300.6px;font-size:22.5px;line-height:22.5px;color:#a4a8ae;font-weight:400;">0.0100%</div>
<div class="t" style="right:3209.0px;top:1366.9px;font-size:22.5px;line-height:22.5px;color:#a4a8ae;font-weight:400;">0%</div>
<div class="t" style="left:3245.0px;top:969.0px;font-size:22.5px;line-height:22.5px;color:#a4a8ae;font-weight:400;">$46.00</div>
<div class="t" style="left:3245.0px;top:1034.3px;font-size:22.5px;line-height:22.5px;color:#a4a8ae;font-weight:400;">$44.00</div>
<div class="t" style="left:3245.0px;top:1099.6px;font-size:22.5px;line-height:22.5px;color:#a4a8ae;font-weight:400;">$42.00</div>
<div class="t" style="left:3245.0px;top:1164.9px;font-size:22.5px;line-height:22.5px;color:#a4a8ae;font-weight:400;">$40.00</div>
<div class="t" style="left:3245.0px;top:1230.2px;font-size:22.5px;line-height:22.5px;color:#a4a8ae;font-weight:400;">$38.00</div>
<div class="t" style="left:3245.0px;top:1295.5px;font-size:22.5px;line-height:22.5px;color:#a4a8ae;font-weight:400;">$36.00</div>
<div class="t" style="left:3245.0px;top:1360.8px;font-size:22.5px;line-height:22.5px;color:#a4a8ae;font-weight:400;">$34.00</div>
<div class="t" style="left:184.3px;transform:translateX(-50%);top:1394.5px;font-size:22.5px;line-height:22.5px;color:#a4a8ae;font-weight:400;">03, 11:30</div>
<div class="t" style="left:311.4px;transform:translateX(-50%);top:1394.5px;font-size:22.5px;line-height:22.5px;color:#a4a8ae;font-weight:400;">03, 12:30</div>
<div class="t" style="left:438.5px;transform:translateX(-50%);top:1394.5px;font-size:22.5px;line-height:22.5px;color:#a4a8ae;font-weight:400;">03, 13:30</div>
<div class="t" style="left:565.5px;transform:translateX(-50%);top:1394.5px;font-size:22.5px;line-height:22.5px;color:#a4a8ae;font-weight:400;">03, 14:30</div>
<div class="t" style="left:692.6px;transform:translateX(-50%);top:1394.5px;font-size:22.5px;line-height:22.5px;color:#a4a8ae;font-weight:400;">03, 15:30</div>
<div class="t" style="left:819.7px;transform:translateX(-50%);top:1394.5px;font-size:22.5px;line-height:22.5px;color:#a4a8ae;font-weight:400;">03, 16:30</div>
<div class="t" style="left:946.8px;transform:translateX(-50%);top:1394.5px;font-size:22.5px;line-height:22.5px;color:#a4a8ae;font-weight:400;">03, 17:30</div>
<div class="t" style="left:1073.9px;transform:translateX(-50%);top:1394.5px;font-size:22.5px;line-height:22.5px;color:#a4a8ae;font-weight:400;">03, 18:30</div>
<div class="t" style="left:1200.9px;transform:translateX(-50%);top:1394.5px;font-size:22.5px;line-height:22.5px;color:#a4a8ae;font-weight:400;">03, 19:30</div>
<div class="t" style="left:1328.0px;transform:translateX(-50%);top:1394.5px;font-size:22.5px;line-height:22.5px;color:#a4a8ae;font-weight:400;">03, 20:30</div>
<div class="t" style="left:1455.1px;transform:translateX(-50%);top:1394.5px;font-size:22.5px;line-height:22.5px;color:#a4a8ae;font-weight:400;">03, 21:30</div>
<div class="t" style="left:1582.2px;transform:translateX(-50%);top:1394.5px;font-size:22.5px;line-height:22.5px;color:#a4a8ae;font-weight:400;">03, 22:30</div>
<div class="t" style="left:1709.3px;transform:translateX(-50%);top:1394.5px;font-size:22.5px;line-height:22.5px;color:#a4a8ae;font-weight:400;">03, 23:30</div>
<div class="t" style="left:1836.3px;transform:translateX(-50%);top:1394.5px;font-size:22.5px;line-height:22.5px;color:#a4a8ae;font-weight:400;">04, 00:30</div>
<div class="t" style="left:1963.4px;transform:translateX(-50%);top:1394.5px;font-size:22.5px;line-height:22.5px;color:#a4a8ae;font-weight:400;">04, 01:30</div>
<div class="t" style="left:2090.5px;transform:translateX(-50%);top:1394.5px;font-size:22.5px;line-height:22.5px;color:#a4a8ae;font-weight:400;">04, 02:30</div>
<div class="t" style="left:2217.6px;transform:translateX(-50%);top:1394.5px;font-size:22.5px;line-height:22.5px;color:#a4a8ae;font-weight:400;">04, 03:30</div>
<div class="t" style="left:2344.7px;transform:translateX(-50%);top:1394.5px;font-size:22.5px;line-height:22.5px;color:#a4a8ae;font-weight:400;">04, 04:30</div>
<div class="t" style="left:2471.7px;transform:translateX(-50%);top:1394.5px;font-size:22.5px;line-height:22.5px;color:#a4a8ae;font-weight:400;">04, 05:30</div>
<div class="t" style="left:2598.8px;transform:translateX(-50%);top:1394.5px;font-size:22.5px;line-height:22.5px;color:#a4a8ae;font-weight:400;">04, 06:30</div>
<div class="t" style="left:2725.9px;transform:translateX(-50%);top:1394.5px;font-size:22.5px;line-height:22.5px;color:#a4a8ae;font-weight:400;">04, 07:30</div>
<div class="r" style="left:99.6px;top:1226.0px;width:72.7px;height:44.0px;background:#000000;border-radius:8px;"></div>
<div class="t" style="left:135.9px;transform:translateX(-50%);top:1237.0px;font-size:23px;line-height:23px;color:#ffffff;font-weight:400;">0.02</div>
<div class="r" style="left:3235.3px;top:1226.5px;width:84.7px;height:43.5px;background:#000000;border-radius:8px;"></div>
<div class="t" style="left:3277.6px;transform:translateX(-50%);top:1237.5px;font-size:23px;line-height:23px;color:#ffffff;font-weight:400;">37.84</div>
<div class="r" style="left:3045.0px;top:1386.0px;width:286.0px;height:43.0px;background:#000000;border-radius:8px;"></div>
<div class="t" style="right:54.0px;top:1393.5px;font-size:23px;line-height:23px;color:#ffffff;font-weight:400;">4 Nov 2025, 11:25</div>
<div class="r" style="left:1696.0px;top:1465.0px;width:29.0px;height:34.5px;background:#373a48;border-radius:9px;"></div>
<div class="r" style="left:1706.5px;top:1475px;width:2px;height:14px;background:#a9aebb"></div><div class="r" style="left:1712.5px;top:1475px;width:2px;height:14px;background:#a9aebb"></div>
<div class="r" style="left:3217.0px;top:1465.0px;width:29.0px;height:34.5px;background:#373a48;border-radius:9px;"></div>
<div class="r" style="left:3227.5px;top:1475px;width:2px;height:14px;background:#a9aebb"></div><div class="r" style="left:3233.5px;top:1475px;width:2px;height:14px;background:#a9aebb"></div>
<div class="r" style="left:2766.0px;top:1290.0px;width:411.0px;height:210.0px;background:#04050a;border-radius:24px;box-shadow:0 2px 18px rgba(0,0,0,0.35);"></div>
<div class="t" style="left:2796.5px;top:1327.6px;font-size:28.5px;line-height:28.5px;color:#ffffff;font-weight:400;">4 Nov 2025, 11:25</div>
<svg class="r" style="left:2795px;top:1394px" width="22" height="66" viewBox="0 0 22 66"><circle cx="11" cy="11.3" r="8" fill="#e2b95f" stroke="#dfe3ea" stroke-width="4"/><circle cx="11" cy="55" r="8" fill="#56b49a" stroke="#dfe3ea" stroke-width="4"/></svg>
<div class="t" style="left:2825.0px;top:1390.5px;font-size:29px;line-height:29px;color:#cfd5de;font-weight:400;">HYPE Price</div>
<div class="t" style="right:224.5px;top:1390.5px;font-size:29px;line-height:29px;color:#ffffff;font-weight:400;">$37.57</div>
<div class="t" style="left:2825.0px;top:1434.9px;font-size:29px;line-height:29px;color:#cfd5de;font-weight:400;">OI-Weighted</div>
<div class="t" style="right:224.5px;top:1434.9px;font-size:29px;line-height:29px;color:#ffffff;font-weight:400;">0.0099%</div>
</body></html>
